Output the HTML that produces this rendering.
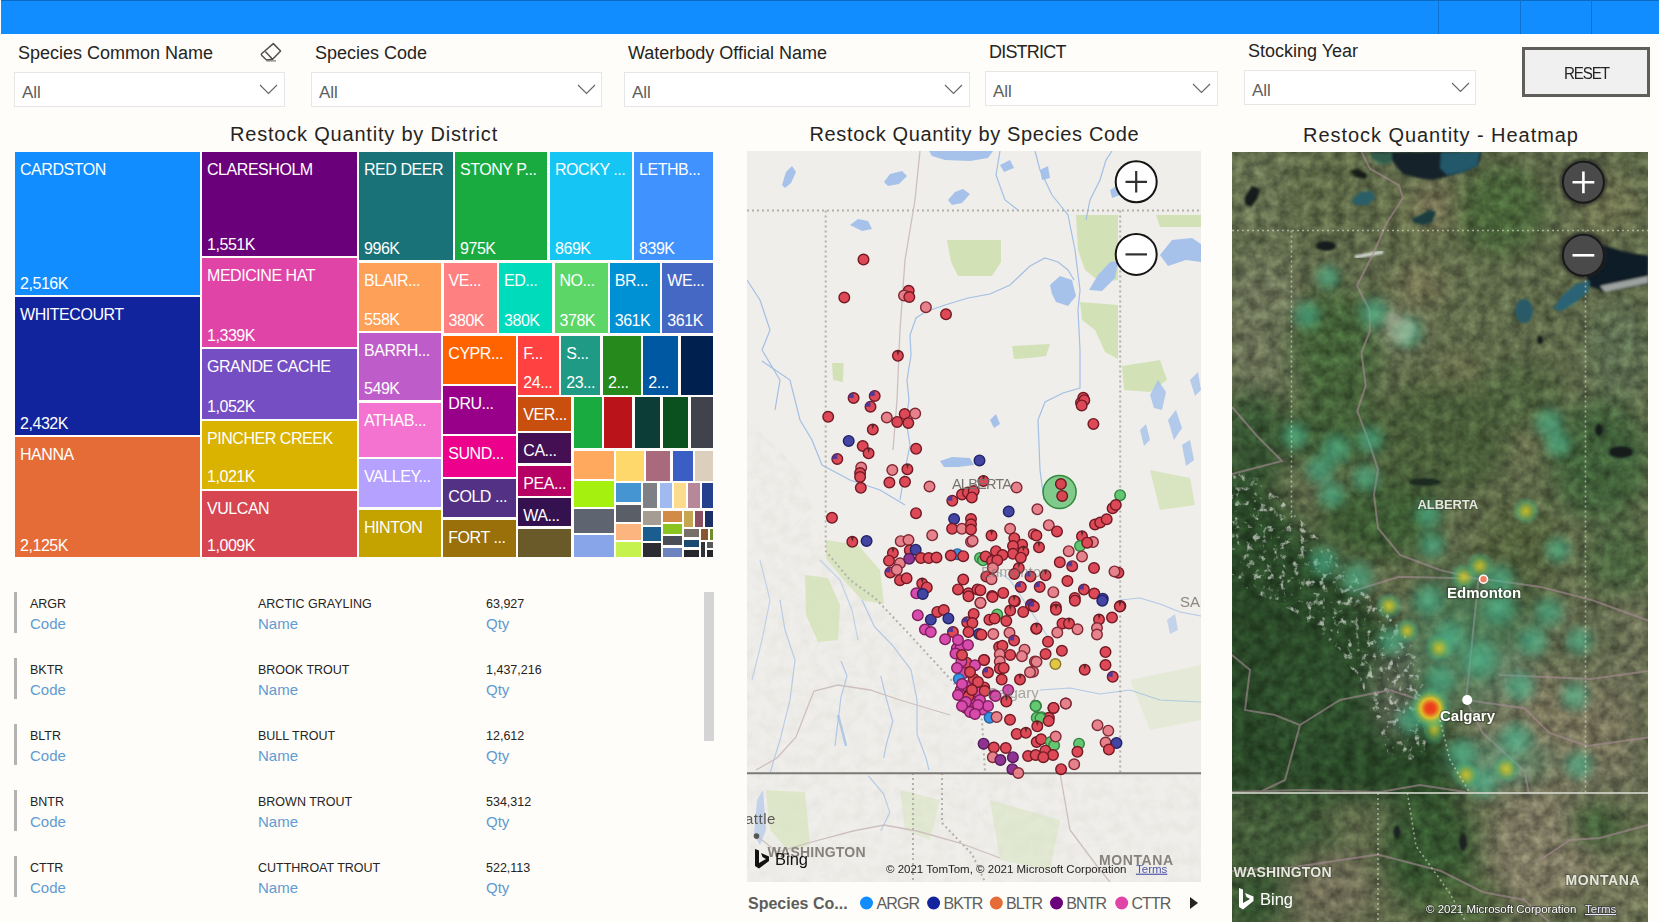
<!DOCTYPE html>
<html><head><meta charset="utf-8">
<style>
*{box-sizing:border-box;margin:0;padding:0}
html,body{width:1660px;height:922px;overflow:hidden;background:#fffdf9;font-family:"Liberation Sans",sans-serif;position:relative}
.a{position:absolute;white-space:nowrap}
.bar{left:1px;top:0;width:1658px;height:33.5px;background:#118dff;border-top:1px solid #0a6bc4}
.div{top:0;width:1px;height:34px;background:#0d72d0}
.lbl{font-size:18px;line-height:18px;color:#252423}
.dd{height:35px;border:1px solid #e6e6e6;background:#fff}
.all{font-size:17px;line-height:17px;color:#605e5c}
.chev{width:17px;height:10px}
.ttl{font-size:20px;line-height:20px;color:#252423;letter-spacing:0.8px}
.tm{position:absolute;overflow:hidden}
.tm span{position:absolute;left:5px;font-size:16px;line-height:16px;color:#fff;white-space:nowrap;letter-spacing:-0.45px}
.tm .n{top:10px}
.tm .v{bottom:-7px}
.row .bl{position:absolute;left:14px;width:3px;height:41px;background:#b3b3b3}
.t13{font-size:12.5px;line-height:13px;color:#252423}
.t15{font-size:15px;line-height:15px;color:#5f9bd1}
</style></head><body>
<div class="a bar"></div>
<div class="a div" style="left:1438px"></div>
<div class="a div" style="left:1520px"></div>
<div class="a div" style="left:1591px"></div>

<!-- slicers -->
<div class="a lbl" style="left:18px;top:44px">Species Common Name</div>
<svg class="a" style="left:258px;top:42px" width="24" height="22" viewBox="0 0 24 22"><path d="M15.3 1.6 L22.6 9 L14.6 17.3 L8.5 18 L3.6 13.2 Q3 12.5 3.6 11.8 Z M7.5 9.8 L14.6 17.3" fill="none" stroke="#505050" stroke-width="1.5" stroke-linejoin="round"/><path d="M8.5 18.9 L18 18.9" stroke="#777" stroke-width="1.2"/></svg>
<div class="a dd" style="left:14px;top:72px;width:271px"></div>
<div class="a all" style="left:22px;top:84px">All</div>

<div class="a lbl" style="left:315px;top:44px">Species Code</div>
<div class="a dd" style="left:311px;top:72px;width:291px"></div>
<div class="a all" style="left:319px;top:84px">All</div>

<div class="a lbl" style="left:628px;top:44px">Waterbody Official Name</div>
<div class="a dd" style="left:624px;top:72px;width:346px"></div>
<div class="a all" style="left:632px;top:84px">All</div>

<div class="a lbl" style="left:989px;top:43px;letter-spacing:-0.8px">DISTRICT</div>
<div class="a dd" style="left:985px;top:71px;width:233px"></div>
<div class="a all" style="left:993px;top:83px">All</div>

<div class="a lbl" style="left:1248px;top:42px">Stocking Year</div>
<div class="a dd" style="left:1244px;top:70px;width:232px"></div>
<div class="a all" style="left:1252px;top:82px">All</div>

<svg class="a" style="left:0;top:0" width="1660" height="110">
<g fill="none" stroke="#666" stroke-width="1.15">
<path d="M260 85 L268.5 93.5 L277 85"/>
<path d="M578 85 L586.5 93.5 L595 85"/>
<path d="M945 85 L953.5 93.5 L962 85"/>
<path d="M1193 84 L1201.5 92.5 L1210 84"/>
<path d="M1452 83 L1460.5 91.5 L1469 83"/>
</g></svg>

<div class="a" style="left:1522px;top:47px;width:128px;height:50px;border:3px solid #5f5e5a;background:#f0f0f0"></div>
<div class="a" style="left:1564px;top:66px;font-size:16px;line-height:16px;color:#252423;letter-spacing:-1.2px;transform:scaleX(0.95);transform-origin:0 0">RESET</div>

<!-- titles -->
<div class="a ttl" style="left:230px;top:124px">Restock Quantity by District</div>
<div class="a ttl" style="left:809.5px;top:124px;letter-spacing:0.65px">Restock Quantity by Species Code</div>
<div class="a ttl" style="left:1303px;top:125px;letter-spacing:0.95px">Restock Quantity - Heatmap</div>

<!-- TREEMAP -->
<div class="tm" style="left:15px;top:152px;width:185px;height:143px;background:#118dff"><span class="n">CARDSTON</span><span class="v" style="top:123.5px">2,516K</span></div>
<div class="tm" style="left:15px;top:297px;width:185px;height:138px;background:#12239e"><span class="n">WHITECOURT</span><span class="v" style="top:118.5px">2,432K</span></div>
<div class="tm" style="left:15px;top:437px;width:185px;height:120px;background:#e66c37"><span class="n">HANNA</span><span class="v" style="top:100.5px">2,125K</span></div>
<div class="tm" style="left:202px;top:152px;width:155px;height:104px;background:#6b007b"><span class="n">CLARESHOLM</span><span class="v" style="top:84.5px">1,551K</span></div>
<div class="tm" style="left:202px;top:258px;width:155px;height:89px;background:#e044a7"><span class="n">MEDICINE HAT</span><span class="v" style="top:69.5px">1,339K</span></div>
<div class="tm" style="left:202px;top:349px;width:155px;height:69.5px;background:#744ec2"><span class="n">GRANDE CACHE</span><span class="v" style="top:50.0px">1,052K</span></div>
<div class="tm" style="left:202px;top:421px;width:155px;height:67.5px;background:#d9b300"><span class="n">PINCHER CREEK</span><span class="v" style="top:48.0px">1,021K</span></div>
<div class="tm" style="left:202px;top:491px;width:155px;height:66px;background:#d64550"><span class="n">VULCAN</span><span class="v" style="top:46.5px">1,009K</span></div>
<div class="tm" style="left:359px;top:152px;width:94px;height:108px;background:#197278"><span class="n">RED DEER</span><span class="v" style="top:88.5px">996K</span></div>
<div class="tm" style="left:455px;top:152px;width:92px;height:108px;background:#1aab40"><span class="n">STONY P...</span><span class="v" style="top:88.5px">975K</span></div>
<div class="tm" style="left:550px;top:152px;width:82px;height:108px;background:#15c6f4"><span class="n">ROCKY ...</span><span class="v" style="top:88.5px">869K</span></div>
<div class="tm" style="left:634px;top:152px;width:79px;height:108px;background:#4092ff"><span class="n">LETHB...</span><span class="v" style="top:88.5px">839K</span></div>
<div class="tm" style="left:359px;top:262.5px;width:82px;height:68.5px;background:#ffa058"><span class="n">BLAIR...</span><span class="v" style="top:49.0px">558K</span></div>
<div class="tm" style="left:443.5px;top:262.5px;width:53.5px;height:70.0px;background:#ff8080"><span class="n">VE...</span><span class="v" style="top:50.5px">380K</span></div>
<div class="tm" style="left:499px;top:262.5px;width:53px;height:70.0px;background:#00dbbc"><span class="n">ED...</span><span class="v" style="top:50.5px">380K</span></div>
<div class="tm" style="left:554.5px;top:262.5px;width:53.0px;height:70.0px;background:#5bd667"><span class="n">NO...</span><span class="v" style="top:50.5px">378K</span></div>
<div class="tm" style="left:609.7px;top:262.5px;width:50.3px;height:70.0px;background:#0091d5"><span class="n">BR...</span><span class="v" style="top:50.5px">361K</span></div>
<div class="tm" style="left:662.3px;top:262.5px;width:50.7px;height:70.0px;background:#4668c5"><span class="n">WE...</span><span class="v" style="top:50.5px">361K</span></div>
<div class="tm" style="left:359px;top:333px;width:82px;height:67px;background:#be5dc9"><span class="n">BARRH...</span><span class="v" style="top:47.5px">549K</span></div>
<div class="tm" style="left:359px;top:403px;width:82px;height:53.5px;background:#f472d0"><span class="n">ATHAB...</span></div>
<div class="tm" style="left:359px;top:459px;width:82px;height:48px;background:#b5a1ff"><span class="n">VALLEY...</span></div>
<div class="tm" style="left:359px;top:510px;width:82px;height:47px;background:#c4a200"><span class="n">HINTON</span></div>
<div class="tm" style="left:443.3px;top:336px;width:72.7px;height:48px;background:#ff6300"><span class="n">CYPR...</span></div>
<div class="tm" style="left:443.3px;top:386px;width:72.7px;height:48px;background:#99008a"><span class="n">DRU...</span></div>
<div class="tm" style="left:443.3px;top:436.3px;width:72.7px;height:40.7px;background:#ec008c"><span class="n">SUND...</span></div>
<div class="tm" style="left:443.3px;top:479.3px;width:72.7px;height:37.7px;background:#533285"><span class="n">COLD ...</span></div>
<div class="tm" style="left:443.3px;top:519.6px;width:72.7px;height:37.4px;background:#99700a"><span class="n">FORT ...</span></div>
<div class="tm" style="left:518.3px;top:336px;width:40.3px;height:58.7px;background:#ff4141"><span class="n">F...</span><span class="v" style="top:39.2px">24...</span></div>
<div class="tm" style="left:561.2px;top:336px;width:38.8px;height:58.7px;background:#1f9a85"><span class="n">S...</span><span class="v" style="top:39.2px">23...</span></div>
<div class="tm" style="left:603px;top:336px;width:37.6px;height:58.7px;background:#25891c"><span class="v" style="top:39.2px">2...</span></div>
<div class="tm" style="left:643.2px;top:336px;width:34.8px;height:58.7px;background:#0057a2"><span class="v" style="top:39.2px">2...</span></div>
<div class="tm" style="left:681px;top:336px;width:32px;height:58.7px;background:#002050"></div>
<div class="tm" style="left:518.3px;top:397.3px;width:52.7px;height:33.3px;background:#c94f0f"><span class="n">VER...</span></div>
<div class="tm" style="left:518.3px;top:433.2px;width:52.7px;height:30.0px;background:#450f54"><span class="n">CA...</span></div>
<div class="tm" style="left:518.3px;top:465.8px;width:52.7px;height:29.9px;background:#b60064"><span class="n">PEA...</span></div>
<div class="tm" style="left:518.3px;top:498.3px;width:52.7px;height:28.1px;background:#34124f"><span class="n">WA...</span></div>
<div class="tm" style="left:518.3px;top:529px;width:52.7px;height:28px;background:#6a5a29"></div>
<div class="tm" style="left:573.5px;top:397.3px;width:28.1px;height:51.0px;background:#1aab40"></div>
<div class="tm" style="left:604.2px;top:397.3px;width:27.8px;height:51.0px;background:#ba141a"></div>
<div class="tm" style="left:634.6px;top:397.3px;width:25.6px;height:51.0px;background:#0c3d37"></div>
<div class="tm" style="left:662.7px;top:397.3px;width:25.3px;height:51.0px;background:#0b511f"></div>
<div class="tm" style="left:690.6px;top:397.3px;width:22.4px;height:51.0px;background:#40434b"></div>
<div class="tm" style="left:573.8px;top:450.6px;width:39.9px;height:28.1px;background:#ffa95e"></div>
<div class="tm" style="left:616.1px;top:450.6px;width:27.8px;height:30.1px;background:#fed86a"></div>
<div class="tm" style="left:646.2px;top:450.6px;width:24.2px;height:30.1px;background:#a86a7c"></div>
<div class="tm" style="left:673.1px;top:450.6px;width:19.6px;height:30.1px;background:#3a5ec4"></div>
<div class="tm" style="left:695px;top:450.6px;width:18px;height:30.1px;background:#dccfbe"></div>
<div class="tm" style="left:573.8px;top:481.4px;width:39.9px;height:25.5px;background:#a6f010"></div>
<div class="tm" style="left:573.8px;top:509.2px;width:39.9px;height:23.7px;background:#5e6470"></div>
<div class="tm" style="left:573.8px;top:535px;width:39.9px;height:21.6px;background:#89a5ea"></div>
<div class="tm" style="left:616.1px;top:483.1px;width:24.7px;height:18.6px;background:#4495d1"></div>
<div class="tm" style="left:616.1px;top:504.7px;width:24.7px;height:17.1px;background:#5a5e67"></div>
<div class="tm" style="left:616.1px;top:524.4px;width:24.7px;height:15.6px;background:#fcb57e"></div>
<div class="tm" style="left:616.1px;top:542.1px;width:24.7px;height:14.5px;background:#c6f24e"></div>
<div class="tm" style="left:643.2px;top:483.1px;width:14.0px;height:25.4px;background:#7e8086"></div>
<div class="tm" style="left:659.8px;top:483.1px;width:12.2px;height:25.4px;background:#a0b9ee"></div>
<div class="tm" style="left:674.2px;top:483.1px;width:12.0px;height:25.4px;background:#fadc8c"></div>
<div class="tm" style="left:688.3px;top:483.1px;width:11.5px;height:25.4px;background:#b7889a"></div>
<div class="tm" style="left:702px;top:483.1px;width:11px;height:25.4px;background:#25418d"></div>
<div class="tm" style="left:643.2px;top:511px;width:17.4px;height:13.8px;background:#a59d93"></div>
<div class="tm" style="left:643.2px;top:527px;width:17.4px;height:14px;background:#1c5d8f"></div>
<div class="tm" style="left:643.2px;top:543px;width:17.4px;height:13.6px;background:#2b2d33"></div>
<div class="tm" style="left:662.9px;top:511px;width:19.3px;height:11px;background:#d38a47"></div>
<div class="tm" style="left:662.9px;top:524.4px;width:19.3px;height:9.5px;background:#8bc421"></div>
<div class="tm" style="left:662.9px;top:536px;width:19.3px;height:9px;background:#4a4d57"></div>
<div class="tm" style="left:662.9px;top:547.8px;width:19.3px;height:8.8px;background:#6d83c0"></div>
<div class="tm" style="left:684.3px;top:511px;width:8.4px;height:15.8px;background:#c5a752"></div>
<div class="tm" style="left:694.8px;top:511px;width:8.1px;height:15.8px;background:#8a5061"></div>
<div class="tm" style="left:705px;top:511px;width:8px;height:15.8px;background:#1b2f66"></div>
<div class="tm" style="left:684.3px;top:528.8px;width:14.8px;height:8.6px;background:#767068"></div>
<div class="tm" style="left:684.3px;top:539.7px;width:14.8px;height:7.4px;background:#1d4a70"></div>
<div class="tm" style="left:684.3px;top:549.6px;width:14.8px;height:7.0px;background:#25272c"></div>
<div class="tm" style="left:701.3px;top:528.8px;width:6.7px;height:10.9px;background:#8a5632"></div>
<div class="tm" style="left:710px;top:528.8px;width:3px;height:10.9px;background:#6e8e2e"></div>
<div class="tm" style="left:701.3px;top:541.5px;width:3.7px;height:15.1px;background:#30343a"></div>
<div class="tm" style="left:706.5px;top:541.5px;width:6.5px;height:6.5px;background:#5a5a5a"></div>
<div class="tm" style="left:706.5px;top:550px;width:6.5px;height:6.6px;background:#25272c"></div>

<!-- TABLE -->
<div class="a" style="left:14px;top:592px;width:3px;height:41px;background:#b3b3b3"></div>
<div class="a t13" style="left:30px;top:597.9px">ARGR</div>
<div class="a t15" style="left:30px;top:616.3px">Code</div>
<div class="a t13" style="left:258px;top:597.9px">ARCTIC GRAYLING</div>
<div class="a t15" style="left:258px;top:616.3px">Name</div>
<div class="a t13" style="left:486px;top:597.9px">63,927</div>
<div class="a t15" style="left:486px;top:616.3px">Qty</div>
<div class="a" style="left:14px;top:658px;width:3px;height:41px;background:#b3b3b3"></div>
<div class="a t13" style="left:30px;top:663.9px">BKTR</div>
<div class="a t15" style="left:30px;top:682.3px">Code</div>
<div class="a t13" style="left:258px;top:663.9px">BROOK TROUT</div>
<div class="a t15" style="left:258px;top:682.3px">Name</div>
<div class="a t13" style="left:486px;top:663.9px">1,437,216</div>
<div class="a t15" style="left:486px;top:682.3px">Qty</div>
<div class="a" style="left:14px;top:724px;width:3px;height:41px;background:#b3b3b3"></div>
<div class="a t13" style="left:30px;top:729.9px">BLTR</div>
<div class="a t15" style="left:30px;top:748.3px">Code</div>
<div class="a t13" style="left:258px;top:729.9px">BULL TROUT</div>
<div class="a t15" style="left:258px;top:748.3px">Name</div>
<div class="a t13" style="left:486px;top:729.9px">12,612</div>
<div class="a t15" style="left:486px;top:748.3px">Qty</div>
<div class="a" style="left:14px;top:790px;width:3px;height:41px;background:#b3b3b3"></div>
<div class="a t13" style="left:30px;top:795.9px">BNTR</div>
<div class="a t15" style="left:30px;top:814.3px">Code</div>
<div class="a t13" style="left:258px;top:795.9px">BROWN TROUT</div>
<div class="a t15" style="left:258px;top:814.3px">Name</div>
<div class="a t13" style="left:486px;top:795.9px">534,312</div>
<div class="a t15" style="left:486px;top:814.3px">Qty</div>
<div class="a" style="left:14px;top:856px;width:3px;height:41px;background:#b3b3b3"></div>
<div class="a t13" style="left:30px;top:861.9px">CTTR</div>
<div class="a t15" style="left:30px;top:880.3px">Code</div>
<div class="a t13" style="left:258px;top:861.9px">CUTTHROAT TROUT</div>
<div class="a t15" style="left:258px;top:880.3px">Name</div>
<div class="a t13" style="left:486px;top:861.9px">522,113</div>
<div class="a t15" style="left:486px;top:880.3px">Qty</div>
<div class="a" style="left:704px;top:592px;width:10px;height:149px;background:#d4d4d4"></div>

<!-- MAP 1 -->
<div class="a" style="left:747px;top:151px;width:454px;height:731px;overflow:hidden"><svg width="454" height="731" viewBox="747 151 454 731" style="display:block">
<rect x="747" y="151" width="454" height="731" fill="#efeeea"/>
<defs>
<filter id="hs" x="0" y="0" width="100%" height="100%">
  <feTurbulence type="fractalNoise" baseFrequency="0.09" numOctaves="3" seed="5" result="n"/>
  <feColorMatrix in="n" type="matrix" values="0 0 0 0 0.55  0 0 0 0 0.55  0 0 0 0 0.52  1.2 0 0 0 -0.45"/>
</filter>
</defs>
<!-- hillshade BC / US mountains -->
<clipPath id="bc"><path d="M747 420 L800 470 L826 551 L875 598 L953 682 L985 773 L1201 773 L1201 882 L747 882 Z"/></clipPath>
<rect x="747" y="400" width="454" height="482" filter="url(#hs)" clip-path="url(#bc)" opacity="0.28"/>
<!-- parks -->
<g fill="#d3e2b6">
<path d="M947 240 L1001 240 L1001 262 L992 276 L958 276 L951 262 Z"/>
<path d="M1076 215 L1118 215 L1118 280 L1100 282 L1085 270 L1078 250 Z"/>
<path d="M1080 302 L1118 305 L1118 359 L1105 352 L1095 330 L1082 320 Z"/>
<path d="M1012 346 L1050 344 L1046 356 L1030 358 L1014 359 Z"/>
<path d="M832 363 L843.5 363 L843 382 L833 380 Z"/>
<path d="M1122 366 L1160 360 L1167 380 L1150 392 L1124 390 Z"/>
<path d="M1156 215 L1201 215 L1201 227 L1160 227 Z"/>
<path d="M805 575 L828 578 L840 605 L838 640 L818 642 L806 615 Z" opacity="0.8"/>
<path d="M826 540 L858 545 L880 570 L884 604 L862 600 L842 578 L826 558 Z" opacity="0.8"/>
<path d="M1150 470 L1190 478 L1195 505 L1160 510 Z" opacity="0.8"/>
<path d="M766 790 L805 792 L810 845 L790 852 L770 830 Z" opacity="0.6"/>
<path d="M990 800 L1060 820 L1050 870 L1000 860 Z" opacity="0.45"/>
<path d="M1130 680 L1201 665 L1201 720 L1150 730 Z" opacity="0.35"/>
<path d="M900 790 L940 800 L930 840 L905 830 Z" opacity="0.45"/>
</g>
<!-- lakes -->
<g fill="#a6c2ea">
<path d="M929 151 L993 151 L988 158 L970 161 L945 160 L932 156 Z"/>
<path d="M884 182 L890 174 L902 171 L907 176 L899 184 L888 186 Z"/>
<path d="M948 200 L955 192 L963 189 L970 194 L962 203 L952 205 Z"/>
<path d="M782 185 L786 172 L792 166 L796 172 L791 183 L785 188 Z"/>
<path d="M850 225 L858 219 L868 221 L872 229 L862 231 Z"/>
<path d="M1050 285 L1060 276 L1072 280 L1076 296 L1068 306 L1056 302 L1052 294 Z"/>
<path d="M1089 290 L1098 275 L1110 262 L1118 261 L1115 278 L1102 291 Z"/>
<path d="M1160 255 L1172 240 L1192 238 L1201 244 L1201 262 L1186 260 L1168 266 Z"/>
<path d="M940 461 L952 457 L970 458 L974 465 L958 467 L944 467 Z"/>
<path d="M1150 395 L1158 380 L1166 392 L1162 410 L1154 408 Z" opacity="0.85"/>
<path d="M1168 420 L1176 410 L1182 428 L1174 440 Z" opacity="0.85"/>
<path d="M1182 445 L1190 440 L1194 460 L1186 466 Z" opacity="0.8"/>
<path d="M1140 430 L1146 424 L1150 440 L1144 446 Z" opacity="0.8"/>
<path d="M1190 380 L1198 372 L1201 390 L1195 396 Z" opacity="0.8"/>
<path d="M1110 190 L1118 185 L1120 195 L1112 198 Z"/>
<path d="M1040 170 L1048 166 L1050 178 L1042 180 Z"/>
<path d="M1000 165 L1010 160 L1014 168 L1004 172 Z"/>
<path d="M990 420 L996 414 L1000 424 L994 428 Z"/>
<path d="M757 800 L763 790 L766 830 L760 845 L754 835 Z" opacity="0.6"/>
<path d="M1167 620 L1175 614 L1178 630 L1170 634 Z" opacity="0.6"/>
</g>
<!-- rivers -->
<g fill="none" stroke="#a3bfe4" stroke-width="1.2">
<path d="M900 500 L905 470 L910 445 L906 420 L909 400 L907 380 L911 355 L910 335 L916 318 L925 312 L945 305 L968 298 L990 294 L1010 285 L1030 266 L1045 258 L1058 262 L1068 270 L1074 280"/>
<path d="M1044 500 L1040 470 L1038 420 L1045 402 L1063 393 L1080 388 L1080 350 L1078 310 L1080 290 L1075 250 L1068 215 L1052 195 L1040 170 L1035 151"/>
<path d="M747 280 L760 300 L770 330 L762 350 L780 380 L775 410"/>
<path d="M762 361 L790 380 L800 420 L812 440 L822 465 L850 480 L880 490 L905 505"/>
<path d="M1000 151 L996 175 L1005 200 L1018 210"/>
<path d="M1086 220 L1090 200 L1100 180 L1106 160 L1112 151"/>
<path d="M1120 600 L1140 598 L1160 604 L1180 612 L1201 616" opacity="0.8"/>
<path d="M1040 690 L1070 688 L1100 694 L1130 690 L1160 700 L1201 702" opacity="0.8"/>
<path d="M862 600 L874.6 627 L892.8 645.6 L911 670 L917 700 L917 734 L926 758 L929 770" opacity="0.8"/>
<path d="M841 661 L847 676 L841 697 L838 721 L835 746" opacity="0.8"/>
<path d="M880.7 676 L886.7 700 L892.8 721.5 L886.7 743 L883.7 758" opacity="0.8"/>
<path d="M780 600 L785 630 L795 660 L790 700 L780 740 L770 773" opacity="0.7"/>
<path d="M760 560 L770 600 L762 640 L752 680" opacity="0.6"/>
<path d="M868.5 776 L883.7 794 L889.8 812.6 L880.7 831" opacity="0.7"/>
<path d="M820 560 L840 580 L852 610 L858 640" opacity="0.6"/>
<path d="M838 715 L842 730 L846 746" stroke-width="2.5" opacity="0.8"/>
<path d="M980 560 L1010 580 L1030 610 L1050 640" opacity="0.7"/>
</g>
<!-- borders -->
<g stroke="#b3afa9" stroke-width="2" stroke-dasharray="2 3" fill="none">
<path d="M747 210.5 L1201 210.5"/>
<path d="M825.7 210.5 L825.7 551 L850 580 L875 598 L910 635 L953 682 L982 720 L985 773"/>
<path d="M1120.2 210.5 L1120.2 773"/>
<path d="M913 773 L913 882"/>
<path d="M942 773 L942 823 L972 854 L985 882"/>
</g>
<path d="M747 773.3 L1201 773.3" stroke="#7c7a76" stroke-width="2"/>
<!-- roads (faint) -->
<g fill="none" stroke="#cdbfc0" stroke-width="1.3">
<path d="M757 836 L777 852 L808 843 L853 831 L884 825 L917 831 L960 843 L1000 858"/>
<path d="M756 770 L777 758 L796 737 L808 706 L814 691 L838 685 L870 690 L900 700 L950 715"/>
<path d="M1060 773 L1070 830 L1100 870 L1110 882"/>
<path d="M920 151 L915 200 L905 260 L900 330 L897 400 L893 450"/>
</g>

<circle cx="1059.6" cy="492" r="16.5" fill="#6cc47a" fill-opacity="0.85" stroke="#2f8a3c" stroke-width="1.5"/>
<g opacity="0.95"><circle cx="863.5" cy="259.6" r="5.3" fill="#dc404e" stroke="#6a0e1a" stroke-width="1.4"/>
<circle cx="844.3" cy="297.5" r="5.3" fill="#dc404e" stroke="#6a0e1a" stroke-width="1.4"/>
<circle cx="908.7" cy="290.8" r="5.3" fill="#dc404e" stroke="#6a0e1a" stroke-width="1.4"/>
<circle cx="904.0" cy="295.6" r="5.3" fill="#e47c86" stroke="#7a1e2c" stroke-width="1.4"/>
<circle cx="909.3" cy="297.0" r="5.3" fill="#dc404e" stroke="#6a0e1a" stroke-width="1.4"/>
<circle cx="925.9" cy="307.2" r="5.3" fill="#e47c86" stroke="#7a1e2c" stroke-width="1.4"/>
<circle cx="946.0" cy="314.3" r="5.3" fill="#dc404e" stroke="#6a0e1a" stroke-width="1.4"/>
<circle cx="897.9" cy="355.8" r="5.3" fill="#dc404e" stroke="#6a0e1a" stroke-width="1.4"/>
<path d="M897.9 355.8 L896.4 350.7 A5.3 5.3 0 0 1 899.6999999999999 350.8 Z" fill="#3a1a1a" opacity="0.85"/>
<circle cx="1083.3" cy="397.8" r="5.3" fill="#dc404e" stroke="#6a0e1a" stroke-width="1.4"/>
<circle cx="1081.0" cy="402.8" r="5.3" fill="#dc404e" stroke="#6a0e1a" stroke-width="1.4"/>
<circle cx="1084.3" cy="400.2" r="5.3" fill="#dc404e" stroke="#6a0e1a" stroke-width="1.4"/>
<circle cx="1081.7" cy="405.4" r="5.3" fill="#dc404e" stroke="#6a0e1a" stroke-width="1.4"/>
<circle cx="1093.4" cy="423.9" r="5.3" fill="#dc404e" stroke="#6a0e1a" stroke-width="1.4"/>
<circle cx="853.6" cy="398.0" r="5.3" fill="#dc404e" stroke="#6a0e1a" stroke-width="1.4"/>
<path d="M853.6 398.0 L853.6 392.7 A5.3 5.3 0 0 0 848.3000000000001 398.0 Z" fill="#3a2d9a" opacity="0.9"/>
<circle cx="874.7" cy="395.9" r="5.3" fill="#dc404e" stroke="#6a0e1a" stroke-width="1.4"/>
<path d="M874.7 395.9 L874.7 390.59999999999997 A5.3 5.3 0 0 0 869.4000000000001 395.9 Z" fill="#3a2d9a" opacity="0.9"/>
<circle cx="870.5" cy="406.7" r="5.3" fill="#dc404e" stroke="#6a0e1a" stroke-width="1.4"/>
<path d="M870.5 406.7 L870.5 401.4 A5.3 5.3 0 0 0 865.2 406.7 Z" fill="#3a2d9a" opacity="0.9"/>
<circle cx="828.2" cy="416.8" r="5.3" fill="#dc404e" stroke="#6a0e1a" stroke-width="1.4"/>
<circle cx="886.8" cy="417.5" r="5.3" fill="#e47c86" stroke="#7a1e2c" stroke-width="1.4"/>
<circle cx="904.7" cy="414.1" r="5.3" fill="#dc404e" stroke="#6a0e1a" stroke-width="1.4"/>
<circle cx="915.2" cy="413.6" r="5.3" fill="#e47c86" stroke="#7a1e2c" stroke-width="1.4"/>
<circle cx="897.2" cy="421.9" r="5.3" fill="#dc404e" stroke="#6a0e1a" stroke-width="1.4"/>
<circle cx="908.3" cy="423.0" r="5.3" fill="#dc404e" stroke="#6a0e1a" stroke-width="1.4"/>
<circle cx="872.8" cy="429.5" r="5.3" fill="#dc404e" stroke="#6a0e1a" stroke-width="1.4"/>
<path d="M872.8 429.5 L871.3 424.4 A5.3 5.3 0 0 1 874.5999999999999 424.5 Z" fill="#3a1a1a" opacity="0.85"/>
<circle cx="848.7" cy="440.9" r="5.3" fill="#3a3aa0" stroke="#161a60" stroke-width="1.4"/>
<circle cx="862.7" cy="446.0" r="5.3" fill="#dc404e" stroke="#6a0e1a" stroke-width="1.4"/>
<circle cx="868.6" cy="453.3" r="5.3" fill="#dc404e" stroke="#6a0e1a" stroke-width="1.4"/>
<path d="M868.6 453.3 L867.1 448.2 A5.3 5.3 0 0 1 870.4 448.3 Z" fill="#3a1a1a" opacity="0.85"/>
<circle cx="916.1" cy="448.8" r="5.3" fill="#dc404e" stroke="#6a0e1a" stroke-width="1.4"/>
<circle cx="837.3" cy="459.0" r="5.3" fill="#dc404e" stroke="#6a0e1a" stroke-width="1.4"/>
<path d="M837.3 459.0 L837.3 453.7 A5.3 5.3 0 0 0 832.0 459.0 Z" fill="#3a2d9a" opacity="0.9"/>
<circle cx="861.2" cy="467.5" r="5.3" fill="#e47c86" stroke="#7a1e2c" stroke-width="1.4"/>
<circle cx="860.1" cy="473.1" r="5.3" fill="#dc404e" stroke="#6a0e1a" stroke-width="1.4"/>
<circle cx="860.1" cy="477.0" r="5.3" fill="#dc404e" stroke="#6a0e1a" stroke-width="1.4"/>
<circle cx="860.8" cy="487.8" r="5.3" fill="#dc404e" stroke="#6a0e1a" stroke-width="1.4"/>
<circle cx="892.3" cy="470.1" r="5.3" fill="#e47c86" stroke="#7a1e2c" stroke-width="1.4"/>
<circle cx="907.4" cy="469.2" r="5.3" fill="#dc404e" stroke="#6a0e1a" stroke-width="1.4"/>
<path d="M907.4 469.2 L905.9 464.09999999999997 A5.3 5.3 0 0 1 909.1999999999999 464.2 Z" fill="#3a1a1a" opacity="0.85"/>
<circle cx="889.4" cy="482.6" r="5.3" fill="#dc404e" stroke="#6a0e1a" stroke-width="1.4"/>
<circle cx="905.0" cy="481.8" r="5.3" fill="#dc404e" stroke="#6a0e1a" stroke-width="1.4"/>
<circle cx="929.5" cy="486.5" r="5.3" fill="#e47c86" stroke="#7a1e2c" stroke-width="1.4"/>
<circle cx="979.5" cy="460.4" r="5.3" fill="#3a3aa0" stroke="#161a60" stroke-width="1.4"/>
<circle cx="983.4" cy="480.9" r="5.3" fill="#dc404e" stroke="#6a0e1a" stroke-width="1.4"/>
<path d="M983.4 480.9 L981.9 475.79999999999995 A5.3 5.3 0 0 1 985.1999999999999 475.9 Z" fill="#3a1a1a" opacity="0.85"/>
<circle cx="1016.6" cy="487.4" r="5.3" fill="#e47c86" stroke="#7a1e2c" stroke-width="1.4"/>
<circle cx="1060.9" cy="484.1" r="5.3" fill="#dc404e" stroke="#6a0e1a" stroke-width="1.4"/>
<circle cx="1062.2" cy="495.9" r="5.3" fill="#dc404e" stroke="#6a0e1a" stroke-width="1.4"/>
<circle cx="1120.1" cy="495.2" r="5.3" fill="#5cc46c" stroke="#2b7c38" stroke-width="1.4"/>
<circle cx="952.3" cy="500.8" r="5.3" fill="#dc404e" stroke="#6a0e1a" stroke-width="1.4"/>
<path d="M952.3 500.8 L952.3 495.5 A5.3 5.3 0 0 0 947.0 500.8 Z" fill="#3a2d9a" opacity="0.9"/>
<circle cx="962.0" cy="494.5" r="5.3" fill="#dc404e" stroke="#6a0e1a" stroke-width="1.4"/>
<circle cx="967.9" cy="492.5" r="5.3" fill="#dc404e" stroke="#6a0e1a" stroke-width="1.4"/>
<circle cx="973.7" cy="491.0" r="5.3" fill="#dc404e" stroke="#6a0e1a" stroke-width="1.4"/>
<circle cx="971.8" cy="497.4" r="5.3" fill="#dc404e" stroke="#6a0e1a" stroke-width="1.4"/>
<circle cx="832.0" cy="517.8" r="5.3" fill="#dc404e" stroke="#6a0e1a" stroke-width="1.4"/>
<circle cx="916.0" cy="513.2" r="5.3" fill="#dc404e" stroke="#6a0e1a" stroke-width="1.4"/>
<circle cx="954.1" cy="519.0" r="5.3" fill="#3a3aa0" stroke="#161a60" stroke-width="1.4"/>
<circle cx="952.1" cy="528.8" r="5.3" fill="#dc404e" stroke="#6a0e1a" stroke-width="1.4"/>
<circle cx="961.9" cy="528.8" r="5.3" fill="#e47c86" stroke="#7a1e2c" stroke-width="1.4"/>
<circle cx="971.0" cy="519.0" r="5.3" fill="#dc404e" stroke="#6a0e1a" stroke-width="1.4"/>
<circle cx="971.0" cy="524.3" r="5.3" fill="#dc404e" stroke="#6a0e1a" stroke-width="1.4"/>
<circle cx="971.0" cy="529.5" r="5.3" fill="#dc404e" stroke="#6a0e1a" stroke-width="1.4"/>
<circle cx="932.2" cy="535.3" r="5.3" fill="#e47c86" stroke="#7a1e2c" stroke-width="1.4"/>
<circle cx="971.0" cy="541.8" r="5.3" fill="#e47c86" stroke="#7a1e2c" stroke-width="1.4"/>
<circle cx="852.3" cy="541.8" r="5.3" fill="#dc404e" stroke="#6a0e1a" stroke-width="1.4"/>
<path d="M852.3 541.8 L850.8 536.6999999999999 A5.3 5.3 0 0 1 854.0999999999999 536.8 Z" fill="#3a1a1a" opacity="0.85"/>
<circle cx="866.6" cy="541.0" r="5.3" fill="#3a3aa0" stroke="#161a60" stroke-width="1.4"/>
<circle cx="900.7" cy="541.2" r="5.3" fill="#e47c86" stroke="#7a1e2c" stroke-width="1.4"/>
<circle cx="908.5" cy="540.1" r="5.3" fill="#e47c86" stroke="#7a1e2c" stroke-width="1.4"/>
<circle cx="892.9" cy="552.9" r="5.3" fill="#dc404e" stroke="#6a0e1a" stroke-width="1.4"/>
<path d="M892.9 552.9 L891.4 547.8 A5.3 5.3 0 0 1 894.6999999999999 547.9 Z" fill="#3a1a1a" opacity="0.85"/>
<circle cx="909.8" cy="550.3" r="5.3" fill="#dc404e" stroke="#6a0e1a" stroke-width="1.4"/>
<circle cx="915.7" cy="549.7" r="5.3" fill="#3a3aa0" stroke="#161a60" stroke-width="1.4"/>
<circle cx="889.0" cy="560.7" r="5.3" fill="#dc404e" stroke="#6a0e1a" stroke-width="1.4"/>
<circle cx="900.0" cy="563.3" r="5.3" fill="#e47c86" stroke="#7a1e2c" stroke-width="1.4"/>
<circle cx="909.2" cy="558.8" r="5.3" fill="#8a2a8e" stroke="#4a1050" stroke-width="1.4"/>
<circle cx="920.9" cy="558.1" r="5.3" fill="#dc404e" stroke="#6a0e1a" stroke-width="1.4"/>
<circle cx="928.7" cy="558.1" r="5.3" fill="#dc404e" stroke="#6a0e1a" stroke-width="1.4"/>
<circle cx="936.5" cy="557.5" r="5.3" fill="#dc404e" stroke="#6a0e1a" stroke-width="1.4"/>
<circle cx="957.4" cy="554.2" r="5.3" fill="#2b8fe8" stroke="#1a5a9a" stroke-width="1.4"/>
<circle cx="950.8" cy="555.5" r="5.3" fill="#dc404e" stroke="#6a0e1a" stroke-width="1.4"/>
<circle cx="963.2" cy="556.2" r="5.3" fill="#dc404e" stroke="#6a0e1a" stroke-width="1.4"/>
<circle cx="890.3" cy="572.4" r="5.3" fill="#dc404e" stroke="#6a0e1a" stroke-width="1.4"/>
<path d="M890.3 572.4 L890.3 567.1 A5.3 5.3 0 0 0 885.0 572.4 Z" fill="#3a2d9a" opacity="0.9"/>
<circle cx="896.8" cy="569.8" r="5.3" fill="#e47c86" stroke="#7a1e2c" stroke-width="1.4"/>
<circle cx="900.0" cy="580.2" r="5.3" fill="#dc404e" stroke="#6a0e1a" stroke-width="1.4"/>
<circle cx="906.6" cy="578.3" r="5.3" fill="#dc404e" stroke="#6a0e1a" stroke-width="1.4"/>
<circle cx="922.2" cy="583.5" r="5.3" fill="#dc404e" stroke="#6a0e1a" stroke-width="1.4"/>
<path d="M922.2 583.5 L920.7 578.4 A5.3 5.3 0 0 1 924.0 578.5 Z" fill="#3a1a1a" opacity="0.85"/>
<circle cx="926.8" cy="587.4" r="5.3" fill="#dc404e" stroke="#6a0e1a" stroke-width="1.4"/>
<circle cx="916.3" cy="593.3" r="5.3" fill="#d442a8" stroke="#7a1258" stroke-width="1.4"/>
<circle cx="922.8" cy="594.0" r="5.3" fill="#3a3aa0" stroke="#161a60" stroke-width="1.4"/>
<circle cx="963.2" cy="579.6" r="5.3" fill="#dc404e" stroke="#6a0e1a" stroke-width="1.4"/>
<circle cx="958.0" cy="589.4" r="5.3" fill="#dc404e" stroke="#6a0e1a" stroke-width="1.4"/>
<circle cx="968.4" cy="593.3" r="5.3" fill="#dc404e" stroke="#6a0e1a" stroke-width="1.4"/>
<circle cx="977.5" cy="589.4" r="5.3" fill="#dc404e" stroke="#6a0e1a" stroke-width="1.4"/>
<circle cx="980.0" cy="558.0" r="5.3" fill="#5cc46c" stroke="#2b7c38" stroke-width="1.4"/>
<circle cx="1008.7" cy="511.5" r="5.3" fill="#3a3aa0" stroke="#161a60" stroke-width="1.4"/>
<circle cx="1037.4" cy="509.3" r="5.3" fill="#e47c86" stroke="#7a1e2c" stroke-width="1.4"/>
<circle cx="1112.6" cy="508.2" r="5.3" fill="#dc404e" stroke="#6a0e1a" stroke-width="1.4"/>
<path d="M1112.6 508.2 L1111.1 503.09999999999997 A5.3 5.3 0 0 1 1114.3999999999999 503.2 Z" fill="#3a1a1a" opacity="0.85"/>
<circle cx="1115.8" cy="505.0" r="5.3" fill="#dc404e" stroke="#6a0e1a" stroke-width="1.4"/>
<circle cx="1095.0" cy="524.5" r="5.3" fill="#dc404e" stroke="#6a0e1a" stroke-width="1.4"/>
<circle cx="1100.2" cy="522.5" r="5.3" fill="#dc404e" stroke="#6a0e1a" stroke-width="1.4"/>
<circle cx="1106.7" cy="519.3" r="5.3" fill="#dc404e" stroke="#6a0e1a" stroke-width="1.4"/>
<circle cx="1048.8" cy="525.2" r="5.3" fill="#e47c86" stroke="#7a1e2c" stroke-width="1.4"/>
<circle cx="1057.0" cy="531.4" r="5.3" fill="#dc404e" stroke="#6a0e1a" stroke-width="1.4"/>
<circle cx="1010.1" cy="528.8" r="5.3" fill="#e47c86" stroke="#7a1e2c" stroke-width="1.4"/>
<circle cx="991.5" cy="535.6" r="5.3" fill="#dc404e" stroke="#6a0e1a" stroke-width="1.4"/>
<path d="M991.5 535.6 L990.0 530.5 A5.3 5.3 0 0 1 993.3 530.6 Z" fill="#3a1a1a" opacity="0.85"/>
<circle cx="972.6" cy="540.8" r="5.3" fill="#e47c86" stroke="#7a1e2c" stroke-width="1.4"/>
<circle cx="1033.8" cy="534.3" r="5.3" fill="#e47c86" stroke="#7a1e2c" stroke-width="1.4"/>
<circle cx="1036.4" cy="535.6" r="5.3" fill="#dc404e" stroke="#6a0e1a" stroke-width="1.4"/>
<circle cx="1039.0" cy="547.3" r="5.3" fill="#dc404e" stroke="#6a0e1a" stroke-width="1.4"/>
<path d="M1039.0 547.3 L1037.5 542.1999999999999 A5.3 5.3 0 0 1 1040.8 542.3 Z" fill="#3a1a1a" opacity="0.85"/>
<circle cx="1014.3" cy="538.2" r="5.3" fill="#dc404e" stroke="#6a0e1a" stroke-width="1.4"/>
<circle cx="1022.1" cy="544.7" r="5.3" fill="#dc404e" stroke="#6a0e1a" stroke-width="1.4"/>
<circle cx="1013.0" cy="546.0" r="5.3" fill="#dc404e" stroke="#6a0e1a" stroke-width="1.4"/>
<circle cx="1023.4" cy="551.8" r="5.3" fill="#dc404e" stroke="#6a0e1a" stroke-width="1.4"/>
<path d="M1023.4 551.8 L1021.9 546.6999999999999 A5.3 5.3 0 0 1 1025.2 546.8 Z" fill="#3a1a1a" opacity="0.85"/>
<circle cx="1013.0" cy="553.8" r="5.3" fill="#dc404e" stroke="#6a0e1a" stroke-width="1.4"/>
<circle cx="1020.8" cy="557.7" r="5.3" fill="#dc404e" stroke="#6a0e1a" stroke-width="1.4"/>
<circle cx="983.0" cy="560.3" r="5.3" fill="#5cc46c" stroke="#2b7c38" stroke-width="1.4"/>
<circle cx="996.0" cy="551.2" r="5.3" fill="#dc404e" stroke="#6a0e1a" stroke-width="1.4"/>
<circle cx="1002.5" cy="555.1" r="5.3" fill="#dc404e" stroke="#6a0e1a" stroke-width="1.4"/>
<circle cx="985.6" cy="556.4" r="5.3" fill="#dc404e" stroke="#6a0e1a" stroke-width="1.4"/>
<circle cx="992.1" cy="561.0" r="5.3" fill="#dc404e" stroke="#6a0e1a" stroke-width="1.4"/>
<circle cx="997.3" cy="560.3" r="5.3" fill="#dc404e" stroke="#6a0e1a" stroke-width="1.4"/>
<circle cx="992.8" cy="568.1" r="5.3" fill="#e47c86" stroke="#7a1e2c" stroke-width="1.4"/>
<circle cx="1082.0" cy="536.2" r="5.3" fill="#dc404e" stroke="#6a0e1a" stroke-width="1.4"/>
<path d="M1082.0 536.2 L1080.5 531.1 A5.3 5.3 0 0 1 1083.8 531.2 Z" fill="#3a1a1a" opacity="0.85"/>
<circle cx="1093.0" cy="542.1" r="5.3" fill="#e47c86" stroke="#7a1e2c" stroke-width="1.4"/>
<circle cx="1080.0" cy="546.0" r="5.3" fill="#5cc46c" stroke="#2b7c38" stroke-width="1.4"/>
<circle cx="1087.2" cy="542.7" r="5.3" fill="#dc404e" stroke="#6a0e1a" stroke-width="1.4"/>
<circle cx="1068.7" cy="551.2" r="5.3" fill="#e47c86" stroke="#7a1e2c" stroke-width="1.4"/>
<circle cx="1082.0" cy="556.4" r="5.3" fill="#e47c86" stroke="#7a1e2c" stroke-width="1.4"/>
<circle cx="1059.8" cy="562.3" r="5.3" fill="#dc404e" stroke="#6a0e1a" stroke-width="1.4"/>
<circle cx="1072.2" cy="566.2" r="5.3" fill="#dc404e" stroke="#6a0e1a" stroke-width="1.4"/>
<path d="M1072.2 566.2 L1072.2 560.9000000000001 A5.3 5.3 0 0 0 1066.9 566.2 Z" fill="#3a2d9a" opacity="0.9"/>
<circle cx="1094.0" cy="568.1" r="5.3" fill="#dc404e" stroke="#6a0e1a" stroke-width="1.4"/>
<circle cx="1118.4" cy="572.7" r="5.3" fill="#dc404e" stroke="#6a0e1a" stroke-width="1.4"/>
<circle cx="1114.5" cy="571.4" r="5.3" fill="#e47c86" stroke="#7a1e2c" stroke-width="1.4"/>
<circle cx="1018.8" cy="568.1" r="5.3" fill="#dc404e" stroke="#6a0e1a" stroke-width="1.4"/>
<path d="M1018.8 568.1 L1017.3 563.0 A5.3 5.3 0 0 1 1020.5999999999999 563.1 Z" fill="#3a1a1a" opacity="0.85"/>
<circle cx="1014.3" cy="574.0" r="5.3" fill="#dc404e" stroke="#6a0e1a" stroke-width="1.4"/>
<circle cx="1030.5" cy="576.6" r="5.3" fill="#dc404e" stroke="#6a0e1a" stroke-width="1.4"/>
<path d="M1030.5 576.6 L1030.5 571.3000000000001 A5.3 5.3 0 0 0 1025.2 576.6 Z" fill="#3a2d9a" opacity="0.9"/>
<circle cx="1045.5" cy="575.3" r="5.3" fill="#dc404e" stroke="#6a0e1a" stroke-width="1.4"/>
<path d="M1045.5 575.3 L1044.0 570.1999999999999 A5.3 5.3 0 0 1 1047.3 570.3 Z" fill="#3a1a1a" opacity="0.85"/>
<circle cx="986.3" cy="576.6" r="5.3" fill="#dc404e" stroke="#6a0e1a" stroke-width="1.4"/>
<circle cx="991.5" cy="579.2" r="5.3" fill="#e47c86" stroke="#7a1e2c" stroke-width="1.4"/>
<circle cx="1067.4" cy="581.1" r="5.3" fill="#dc404e" stroke="#6a0e1a" stroke-width="1.4"/>
<circle cx="1020.8" cy="587.0" r="5.3" fill="#dc404e" stroke="#6a0e1a" stroke-width="1.4"/>
<path d="M1020.8 587.0 L1020.8 581.7 A5.3 5.3 0 0 0 1015.5 587.0 Z" fill="#3a2d9a" opacity="0.9"/>
<circle cx="1039.7" cy="587.0" r="5.3" fill="#dc404e" stroke="#6a0e1a" stroke-width="1.4"/>
<path d="M1039.7 587.0 L1039.7 581.7 A5.3 5.3 0 0 0 1034.4 587.0 Z" fill="#3a2d9a" opacity="0.9"/>
<circle cx="980.4" cy="590.2" r="5.3" fill="#dc404e" stroke="#6a0e1a" stroke-width="1.4"/>
<circle cx="992.1" cy="596.1" r="5.3" fill="#dc404e" stroke="#6a0e1a" stroke-width="1.4"/>
<circle cx="1003.2" cy="592.9" r="5.3" fill="#dc404e" stroke="#6a0e1a" stroke-width="1.4"/>
<circle cx="1053.3" cy="592.2" r="5.3" fill="#e47c86" stroke="#7a1e2c" stroke-width="1.4"/>
<circle cx="1083.9" cy="589.6" r="5.3" fill="#dc404e" stroke="#6a0e1a" stroke-width="1.4"/>
<path d="M1083.9 589.6 L1083.9 584.3000000000001 A5.3 5.3 0 0 0 1078.6000000000001 589.6 Z" fill="#3a2d9a" opacity="0.9"/>
<circle cx="1094.3" cy="593.5" r="5.3" fill="#dc404e" stroke="#6a0e1a" stroke-width="1.4"/>
<circle cx="1102.8" cy="598.7" r="5.3" fill="#3a3aa0" stroke="#161a60" stroke-width="1.4"/>
<circle cx="1074.8" cy="598.1" r="5.3" fill="#dc404e" stroke="#6a0e1a" stroke-width="1.4"/>
<circle cx="980.4" cy="603.0" r="5.3" fill="#e47c86" stroke="#7a1e2c" stroke-width="1.4"/>
<circle cx="1014.9" cy="601.3" r="5.3" fill="#dc404e" stroke="#6a0e1a" stroke-width="1.4"/>
<path d="M1014.9 601.3 L1013.4 596.1999999999999 A5.3 5.3 0 0 1 1016.6999999999999 596.3 Z" fill="#3a1a1a" opacity="0.85"/>
<circle cx="1031.2" cy="604.6" r="5.3" fill="#dc404e" stroke="#6a0e1a" stroke-width="1.4"/>
<path d="M1031.2 604.6 L1031.2 599.3000000000001 A5.3 5.3 0 0 0 1025.9 604.6 Z" fill="#3a2d9a" opacity="0.9"/>
<circle cx="1120.4" cy="605.9" r="5.3" fill="#dc404e" stroke="#6a0e1a" stroke-width="1.4"/>
<path d="M1120.4 605.9 L1118.9 600.8 A5.3 5.3 0 0 1 1122.2 600.9 Z" fill="#3a1a1a" opacity="0.85"/>
<circle cx="1055.9" cy="607.2" r="5.3" fill="#dc404e" stroke="#6a0e1a" stroke-width="1.4"/>
<circle cx="917.8" cy="615.2" r="5.3" fill="#d442a8" stroke="#7a1258" stroke-width="1.4"/>
<circle cx="930.8" cy="619.7" r="5.3" fill="#3a3aa0" stroke="#161a60" stroke-width="1.4"/>
<circle cx="937.3" cy="611.9" r="5.3" fill="#dc404e" stroke="#6a0e1a" stroke-width="1.4"/>
<circle cx="943.8" cy="610.0" r="5.3" fill="#dc404e" stroke="#6a0e1a" stroke-width="1.4"/>
<circle cx="948.4" cy="618.4" r="5.3" fill="#3a3aa0" stroke="#161a60" stroke-width="1.4"/>
<circle cx="924.9" cy="629.5" r="5.3" fill="#d442a8" stroke="#7a1258" stroke-width="1.4"/>
<circle cx="930.8" cy="632.1" r="5.3" fill="#d442a8" stroke="#7a1258" stroke-width="1.4"/>
<circle cx="952.9" cy="632.1" r="5.3" fill="#dc404e" stroke="#6a0e1a" stroke-width="1.4"/>
<path d="M952.9 632.1 L952.9 626.8000000000001 A5.3 5.3 0 0 0 947.6 632.1 Z" fill="#3a2d9a" opacity="0.9"/>
<circle cx="945.1" cy="639.3" r="5.3" fill="#d442a8" stroke="#7a1258" stroke-width="1.4"/>
<circle cx="973.7" cy="613.9" r="5.3" fill="#dc404e" stroke="#6a0e1a" stroke-width="1.4"/>
<circle cx="967.2" cy="622.3" r="5.3" fill="#dc404e" stroke="#6a0e1a" stroke-width="1.4"/>
<path d="M967.2 622.3 L967.2 617.0 A5.3 5.3 0 0 0 961.9000000000001 622.3 Z" fill="#3a2d9a" opacity="0.9"/>
<circle cx="972.4" cy="623.0" r="5.3" fill="#dc404e" stroke="#6a0e1a" stroke-width="1.4"/>
<circle cx="968.5" cy="632.1" r="5.3" fill="#dc404e" stroke="#6a0e1a" stroke-width="1.4"/>
<circle cx="979.0" cy="634.1" r="5.3" fill="#3a3aa0" stroke="#161a60" stroke-width="1.4"/>
<circle cx="981.5" cy="634.7" r="5.3" fill="#dc404e" stroke="#6a0e1a" stroke-width="1.4"/>
<circle cx="980.5" cy="602.8" r="5.3" fill="#e47c86" stroke="#7a1e2c" stroke-width="1.4"/>
<circle cx="968.5" cy="596.3" r="5.3" fill="#dc404e" stroke="#6a0e1a" stroke-width="1.4"/>
<circle cx="992.6" cy="597.0" r="5.3" fill="#dc404e" stroke="#6a0e1a" stroke-width="1.4"/>
<circle cx="1014.1" cy="600.9" r="5.3" fill="#dc404e" stroke="#6a0e1a" stroke-width="1.4"/>
<path d="M1014.1 600.9 L1012.6 595.8 A5.3 5.3 0 0 1 1015.9 595.9 Z" fill="#3a1a1a" opacity="0.85"/>
<circle cx="1031.0" cy="605.4" r="5.3" fill="#dc404e" stroke="#6a0e1a" stroke-width="1.4"/>
<path d="M1031.0 605.4 L1031.0 600.1 A5.3 5.3 0 0 0 1025.7 605.4 Z" fill="#3a2d9a" opacity="0.9"/>
<circle cx="1023.2" cy="611.9" r="5.3" fill="#dc404e" stroke="#6a0e1a" stroke-width="1.4"/>
<circle cx="997.2" cy="614.5" r="5.3" fill="#5cc46c" stroke="#2b7c38" stroke-width="1.4"/>
<circle cx="989.4" cy="619.7" r="5.3" fill="#dc404e" stroke="#6a0e1a" stroke-width="1.4"/>
<circle cx="994.6" cy="618.4" r="5.3" fill="#dc404e" stroke="#6a0e1a" stroke-width="1.4"/>
<circle cx="1010.2" cy="610.6" r="5.3" fill="#dc404e" stroke="#6a0e1a" stroke-width="1.4"/>
<path d="M1010.2 610.6 L1008.7 605.5 A5.3 5.3 0 0 1 1012.0 605.6 Z" fill="#3a1a1a" opacity="0.85"/>
<circle cx="1006.3" cy="621.0" r="5.3" fill="#dc404e" stroke="#6a0e1a" stroke-width="1.4"/>
<circle cx="993.3" cy="634.1" r="5.3" fill="#e47c86" stroke="#7a1e2c" stroke-width="1.4"/>
<circle cx="1009.5" cy="632.8" r="5.3" fill="#e47c86" stroke="#7a1e2c" stroke-width="1.4"/>
<circle cx="1014.1" cy="640.6" r="5.3" fill="#dc404e" stroke="#6a0e1a" stroke-width="1.4"/>
<path d="M1014.1 640.6 L1014.1 635.3000000000001 A5.3 5.3 0 0 0 1008.8000000000001 640.6 Z" fill="#3a2d9a" opacity="0.9"/>
<circle cx="1036.2" cy="628.8" r="5.3" fill="#dc404e" stroke="#6a0e1a" stroke-width="1.4"/>
<path d="M1036.2 628.8 L1034.7 623.6999999999999 A5.3 5.3 0 0 1 1038.0 623.8 Z" fill="#3a1a1a" opacity="0.85"/>
<circle cx="956.8" cy="648.4" r="5.3" fill="#d442a8" stroke="#7a1258" stroke-width="1.4"/>
<circle cx="960.7" cy="647.1" r="5.3" fill="#d442a8" stroke="#7a1258" stroke-width="1.4"/>
<circle cx="955.5" cy="653.6" r="5.3" fill="#d442a8" stroke="#7a1258" stroke-width="1.4"/>
<circle cx="999.1" cy="647.1" r="5.3" fill="#dc404e" stroke="#6a0e1a" stroke-width="1.4"/>
<path d="M999.1 647.1 L997.6 642.0 A5.3 5.3 0 0 1 1000.9 642.1 Z" fill="#3a1a1a" opacity="0.85"/>
<circle cx="1002.4" cy="645.8" r="5.3" fill="#dc404e" stroke="#6a0e1a" stroke-width="1.4"/>
<circle cx="999.8" cy="654.2" r="5.3" fill="#e47c86" stroke="#7a1e2c" stroke-width="1.4"/>
<circle cx="1010.2" cy="654.9" r="5.3" fill="#dc404e" stroke="#6a0e1a" stroke-width="1.4"/>
<circle cx="1024.5" cy="649.7" r="5.3" fill="#e47c86" stroke="#7a1e2c" stroke-width="1.4"/>
<circle cx="1021.9" cy="656.2" r="5.3" fill="#e47c86" stroke="#7a1e2c" stroke-width="1.4"/>
<circle cx="984.2" cy="660.1" r="5.3" fill="#e47c86" stroke="#7a1e2c" stroke-width="1.4"/>
<circle cx="966.6" cy="662.7" r="5.3" fill="#dc404e" stroke="#6a0e1a" stroke-width="1.4"/>
<circle cx="975.0" cy="665.3" r="5.3" fill="#d442a8" stroke="#7a1258" stroke-width="1.4"/>
<circle cx="961.4" cy="661.4" r="5.3" fill="#d442a8" stroke="#7a1258" stroke-width="1.4"/>
<circle cx="999.8" cy="661.4" r="5.3" fill="#e47c86" stroke="#7a1e2c" stroke-width="1.4"/>
<circle cx="999.8" cy="668.6" r="5.3" fill="#dc404e" stroke="#6a0e1a" stroke-width="1.4"/>
<circle cx="1003.7" cy="667.9" r="5.3" fill="#dc404e" stroke="#6a0e1a" stroke-width="1.4"/>
<circle cx="988.0" cy="672.5" r="5.3" fill="#dc404e" stroke="#6a0e1a" stroke-width="1.4"/>
<path d="M988.0 672.5 L988.0 667.2 A5.3 5.3 0 0 0 982.7 672.5 Z" fill="#3a2d9a" opacity="0.9"/>
<circle cx="1034.9" cy="661.4" r="5.3" fill="#e47c86" stroke="#7a1e2c" stroke-width="1.4"/>
<circle cx="1033.0" cy="671.8" r="5.3" fill="#e47c86" stroke="#7a1e2c" stroke-width="1.4"/>
<circle cx="964.0" cy="673.1" r="5.3" fill="#d442a8" stroke="#7a1258" stroke-width="1.4"/>
<circle cx="958.8" cy="679.0" r="5.3" fill="#2b8fe8" stroke="#1a5a9a" stroke-width="1.4"/>
<circle cx="973.7" cy="679.0" r="5.3" fill="#dc404e" stroke="#6a0e1a" stroke-width="1.4"/>
<circle cx="1001.7" cy="679.6" r="5.3" fill="#dc404e" stroke="#6a0e1a" stroke-width="1.4"/>
<circle cx="1020.0" cy="679.6" r="5.3" fill="#dc404e" stroke="#6a0e1a" stroke-width="1.4"/>
<path d="M1020.0 679.6 L1018.5 674.5 A5.3 5.3 0 0 1 1021.8 674.6 Z" fill="#3a1a1a" opacity="0.85"/>
<circle cx="984.2" cy="687.4" r="5.3" fill="#dc404e" stroke="#6a0e1a" stroke-width="1.4"/>
<circle cx="960.7" cy="690.0" r="5.3" fill="#d442a8" stroke="#7a1258" stroke-width="1.4"/>
<circle cx="965.9" cy="686.1" r="5.3" fill="#d442a8" stroke="#7a1258" stroke-width="1.4"/>
<circle cx="969.8" cy="694.0" r="5.3" fill="#dc404e" stroke="#6a0e1a" stroke-width="1.4"/>
<circle cx="976.3" cy="691.3" r="5.3" fill="#d442a8" stroke="#7a1258" stroke-width="1.4"/>
<circle cx="994.6" cy="695.2" r="5.3" fill="#d442a8" stroke="#7a1258" stroke-width="1.4"/>
<circle cx="1008.2" cy="690.0" r="5.3" fill="#d442a8" stroke="#7a1258" stroke-width="1.4"/>
<circle cx="1006.3" cy="701.1" r="5.3" fill="#dc404e" stroke="#6a0e1a" stroke-width="1.4"/>
<path d="M1006.3 701.1 L1004.8 696.0 A5.3 5.3 0 0 1 1008.0999999999999 696.1 Z" fill="#3a1a1a" opacity="0.85"/>
<circle cx="964.6" cy="699.2" r="5.3" fill="#d442a8" stroke="#7a1258" stroke-width="1.4"/>
<circle cx="973.7" cy="701.8" r="5.3" fill="#d442a8" stroke="#7a1258" stroke-width="1.4"/>
<circle cx="973.7" cy="708.3" r="5.3" fill="#d442a8" stroke="#7a1258" stroke-width="1.4"/>
<circle cx="982.9" cy="709.6" r="5.3" fill="#d442a8" stroke="#7a1258" stroke-width="1.4"/>
<circle cx="1035.6" cy="705.7" r="5.3" fill="#5cc46c" stroke="#2b7c38" stroke-width="1.4"/>
<circle cx="1074.9" cy="600.7" r="5.3" fill="#dc404e" stroke="#6a0e1a" stroke-width="1.4"/>
<circle cx="1102.3" cy="600.7" r="5.3" fill="#3a3aa0" stroke="#161a60" stroke-width="1.4"/>
<circle cx="1119.8" cy="606.5" r="5.3" fill="#dc404e" stroke="#6a0e1a" stroke-width="1.4"/>
<path d="M1119.8 606.5 L1118.3 601.4 A5.3 5.3 0 0 1 1121.6 601.5 Z" fill="#3a1a1a" opacity="0.85"/>
<circle cx="1033.9" cy="606.5" r="5.3" fill="#dc404e" stroke="#6a0e1a" stroke-width="1.4"/>
<path d="M1033.9 606.5 L1033.9 601.2 A5.3 5.3 0 0 0 1028.6000000000001 606.5 Z" fill="#3a2d9a" opacity="0.9"/>
<circle cx="1056.0" cy="609.8" r="5.3" fill="#dc404e" stroke="#6a0e1a" stroke-width="1.4"/>
<path d="M1056.0 609.8 L1054.5 604.6999999999999 A5.3 5.3 0 0 1 1057.8 604.8 Z" fill="#3a1a1a" opacity="0.85"/>
<circle cx="1112.0" cy="617.6" r="5.3" fill="#dc404e" stroke="#6a0e1a" stroke-width="1.4"/>
<circle cx="1099.0" cy="619.5" r="5.3" fill="#dc404e" stroke="#6a0e1a" stroke-width="1.4"/>
<path d="M1099.0 619.5 L1097.5 614.4 A5.3 5.3 0 0 1 1100.8 614.5 Z" fill="#3a1a1a" opacity="0.85"/>
<circle cx="1062.5" cy="623.4" r="5.3" fill="#dc404e" stroke="#6a0e1a" stroke-width="1.4"/>
<circle cx="1069.0" cy="623.4" r="5.3" fill="#dc404e" stroke="#6a0e1a" stroke-width="1.4"/>
<path d="M1069.0 623.4 L1067.5 618.3 A5.3 5.3 0 0 1 1070.8 618.4 Z" fill="#3a1a1a" opacity="0.85"/>
<circle cx="1077.5" cy="629.3" r="5.3" fill="#e47c86" stroke="#7a1e2c" stroke-width="1.4"/>
<circle cx="1036.5" cy="628.6" r="5.3" fill="#dc404e" stroke="#6a0e1a" stroke-width="1.4"/>
<path d="M1036.5 628.6 L1035.0 623.5 A5.3 5.3 0 0 1 1038.3 623.6 Z" fill="#3a1a1a" opacity="0.85"/>
<circle cx="1057.3" cy="632.5" r="5.3" fill="#e47c86" stroke="#7a1e2c" stroke-width="1.4"/>
<circle cx="1097.0" cy="628.0" r="5.3" fill="#e47c86" stroke="#7a1e2c" stroke-width="1.4"/>
<circle cx="1097.0" cy="634.5" r="5.3" fill="#e47c86" stroke="#7a1e2c" stroke-width="1.4"/>
<circle cx="1048.0" cy="641.7" r="5.3" fill="#dc404e" stroke="#6a0e1a" stroke-width="1.4"/>
<circle cx="1061.9" cy="650.8" r="5.3" fill="#dc404e" stroke="#6a0e1a" stroke-width="1.4"/>
<circle cx="1045.6" cy="654.0" r="5.3" fill="#dc404e" stroke="#6a0e1a" stroke-width="1.4"/>
<circle cx="1105.5" cy="652.1" r="5.3" fill="#dc404e" stroke="#6a0e1a" stroke-width="1.4"/>
<circle cx="1036.5" cy="661.8" r="5.3" fill="#e47c86" stroke="#7a1e2c" stroke-width="1.4"/>
<circle cx="1055.4" cy="664.1" r="5.3" fill="#e2c43a" stroke="#7f7024" stroke-width="1.4"/>
<circle cx="1030.0" cy="672.3" r="5.3" fill="#e47c86" stroke="#7a1e2c" stroke-width="1.4"/>
<circle cx="1084.7" cy="669.7" r="5.3" fill="#dc404e" stroke="#6a0e1a" stroke-width="1.4"/>
<path d="M1084.7 669.7 L1083.2 664.6 A5.3 5.3 0 0 1 1086.5 664.7 Z" fill="#3a1a1a" opacity="0.85"/>
<circle cx="1105.5" cy="665.1" r="5.3" fill="#dc404e" stroke="#6a0e1a" stroke-width="1.4"/>
<circle cx="1112.7" cy="676.8" r="5.3" fill="#dc404e" stroke="#6a0e1a" stroke-width="1.4"/>
<path d="M1112.7 676.8 L1112.7 671.5 A5.3 5.3 0 0 0 1107.4 676.8 Z" fill="#3a2d9a" opacity="0.9"/>
<circle cx="1035.9" cy="706.1" r="5.3" fill="#5cc46c" stroke="#2b7c38" stroke-width="1.4"/>
<circle cx="1053.4" cy="708.1" r="5.3" fill="#dc404e" stroke="#6a0e1a" stroke-width="1.4"/>
<circle cx="1065.8" cy="703.5" r="5.3" fill="#e47c86" stroke="#7a1e2c" stroke-width="1.4"/>
<circle cx="1037.8" cy="717.2" r="5.3" fill="#5cc46c" stroke="#2b7c38" stroke-width="1.4"/>
<circle cx="1041.7" cy="717.2" r="5.3" fill="#5cc46c" stroke="#2b7c38" stroke-width="1.4"/>
<circle cx="1048.9" cy="717.8" r="5.3" fill="#dc404e" stroke="#6a0e1a" stroke-width="1.4"/>
<circle cx="968.4" cy="696.5" r="5.3" fill="#dc404e" stroke="#6a0e1a" stroke-width="1.4"/>
<circle cx="984.7" cy="691.1" r="5.3" fill="#dc404e" stroke="#6a0e1a" stroke-width="1.4"/>
<circle cx="995.5" cy="696.0" r="5.3" fill="#d442a8" stroke="#7a1258" stroke-width="1.4"/>
<circle cx="1006.4" cy="701.4" r="5.3" fill="#dc404e" stroke="#6a0e1a" stroke-width="1.4"/>
<path d="M1006.4 701.4 L1004.9 696.3 A5.3 5.3 0 0 1 1008.1999999999999 696.4 Z" fill="#3a1a1a" opacity="0.85"/>
<circle cx="989.6" cy="717.7" r="5.3" fill="#2b8fe8" stroke="#1a5a9a" stroke-width="1.4"/>
<circle cx="996.6" cy="717.1" r="5.3" fill="#e47c86" stroke="#7a1e2c" stroke-width="1.4"/>
<circle cx="1010.0" cy="719.8" r="5.3" fill="#dc404e" stroke="#6a0e1a" stroke-width="1.4"/>
<circle cx="1035.7" cy="706.0" r="5.3" fill="#5cc46c" stroke="#2b7c38" stroke-width="1.4"/>
<circle cx="1053.6" cy="707.9" r="5.3" fill="#dc404e" stroke="#6a0e1a" stroke-width="1.4"/>
<circle cx="1065.8" cy="703.6" r="5.3" fill="#e47c86" stroke="#7a1e2c" stroke-width="1.4"/>
<circle cx="1036.7" cy="717.7" r="5.3" fill="#5cc46c" stroke="#2b7c38" stroke-width="1.4"/>
<circle cx="1040.5" cy="718.2" r="5.3" fill="#5cc46c" stroke="#2b7c38" stroke-width="1.4"/>
<circle cx="1048.7" cy="720.9" r="5.3" fill="#dc404e" stroke="#6a0e1a" stroke-width="1.4"/>
<circle cx="1037.3" cy="726.3" r="5.3" fill="#dc404e" stroke="#6a0e1a" stroke-width="1.4"/>
<path d="M1037.3 726.3 L1035.8 721.1999999999999 A5.3 5.3 0 0 1 1039.1 721.3 Z" fill="#3a1a1a" opacity="0.85"/>
<circle cx="1016.7" cy="733.9" r="5.3" fill="#dc404e" stroke="#6a0e1a" stroke-width="1.4"/>
<circle cx="1025.9" cy="732.8" r="5.3" fill="#dc404e" stroke="#6a0e1a" stroke-width="1.4"/>
<path d="M1025.9 732.8 L1024.4 727.6999999999999 A5.3 5.3 0 0 1 1027.7 727.8 Z" fill="#3a1a1a" opacity="0.85"/>
<circle cx="1097.5" cy="725.2" r="5.3" fill="#e47c86" stroke="#7a1e2c" stroke-width="1.4"/>
<circle cx="1108.3" cy="730.7" r="5.3" fill="#e47c86" stroke="#7a1e2c" stroke-width="1.4"/>
<circle cx="1105.6" cy="742.6" r="5.3" fill="#e47c86" stroke="#7a1e2c" stroke-width="1.4"/>
<circle cx="1116.5" cy="743.1" r="5.3" fill="#3a3aa0" stroke="#161a60" stroke-width="1.4"/>
<circle cx="1108.9" cy="749.6" r="5.3" fill="#dc404e" stroke="#6a0e1a" stroke-width="1.4"/>
<circle cx="983.6" cy="743.7" r="5.3" fill="#8a2a8e" stroke="#4a1050" stroke-width="1.4"/>
<circle cx="993.9" cy="747.5" r="5.3" fill="#dc404e" stroke="#6a0e1a" stroke-width="1.4"/>
<circle cx="1005.8" cy="748.0" r="5.3" fill="#dc404e" stroke="#6a0e1a" stroke-width="1.4"/>
<circle cx="992.8" cy="757.2" r="5.3" fill="#e47c86" stroke="#7a1e2c" stroke-width="1.4"/>
<circle cx="1000.4" cy="760.0" r="5.3" fill="#8a2a8e" stroke="#4a1050" stroke-width="1.4"/>
<circle cx="1012.9" cy="757.2" r="5.3" fill="#8a2a8e" stroke="#4a1050" stroke-width="1.4"/>
<circle cx="1012.4" cy="769.2" r="5.3" fill="#8a2a8e" stroke="#4a1050" stroke-width="1.4"/>
<circle cx="1018.3" cy="773.0" r="5.3" fill="#e47c86" stroke="#7a1e2c" stroke-width="1.4"/>
<circle cx="1036.7" cy="742.0" r="5.3" fill="#dc404e" stroke="#6a0e1a" stroke-width="1.4"/>
<path d="M1036.7 742.0 L1035.2 736.9 A5.3 5.3 0 0 1 1038.5 737.0 Z" fill="#3a1a1a" opacity="0.85"/>
<circle cx="1041.1" cy="739.3" r="5.3" fill="#dc404e" stroke="#6a0e1a" stroke-width="1.4"/>
<circle cx="1050.8" cy="742.0" r="5.3" fill="#5cc46c" stroke="#2b7c38" stroke-width="1.4"/>
<circle cx="1054.1" cy="745.3" r="5.3" fill="#5cc46c" stroke="#2b7c38" stroke-width="1.4"/>
<circle cx="1055.7" cy="736.6" r="5.3" fill="#e47c86" stroke="#7a1e2c" stroke-width="1.4"/>
<circle cx="1028.1" cy="756.1" r="5.3" fill="#dc404e" stroke="#6a0e1a" stroke-width="1.4"/>
<circle cx="1035.7" cy="755.0" r="5.3" fill="#dc404e" stroke="#6a0e1a" stroke-width="1.4"/>
<circle cx="1045.4" cy="750.7" r="5.3" fill="#dc404e" stroke="#6a0e1a" stroke-width="1.4"/>
<circle cx="1053.0" cy="755.0" r="5.3" fill="#dc404e" stroke="#6a0e1a" stroke-width="1.4"/>
<circle cx="1043.3" cy="757.2" r="5.3" fill="#dc404e" stroke="#6a0e1a" stroke-width="1.4"/>
<circle cx="1079.0" cy="743.7" r="5.3" fill="#5cc46c" stroke="#2b7c38" stroke-width="1.4"/>
<circle cx="1077.4" cy="751.8" r="5.3" fill="#dc404e" stroke="#6a0e1a" stroke-width="1.4"/>
<circle cx="1074.2" cy="764.3" r="5.3" fill="#e47c86" stroke="#7a1e2c" stroke-width="1.4"/>
<circle cx="1061.1" cy="769.2" r="5.3" fill="#dc404e" stroke="#6a0e1a" stroke-width="1.4"/>
<circle cx="958.0" cy="640.0" r="5.3" fill="#d442a8" stroke="#7a1258" stroke-width="1.4"/>
<circle cx="962.0" cy="655.0" r="5.3" fill="#dc404e" stroke="#6a0e1a" stroke-width="1.4"/>
<circle cx="968.0" cy="645.0" r="5.3" fill="#d442a8" stroke="#7a1258" stroke-width="1.4"/>
<circle cx="957.0" cy="668.0" r="5.3" fill="#d442a8" stroke="#7a1258" stroke-width="1.4"/>
<circle cx="970.0" cy="672.0" r="5.3" fill="#dc404e" stroke="#6a0e1a" stroke-width="1.4"/>
<circle cx="978.0" cy="682.0" r="5.3" fill="#dc404e" stroke="#6a0e1a" stroke-width="1.4"/>
<circle cx="962.0" cy="684.0" r="5.3" fill="#d442a8" stroke="#7a1258" stroke-width="1.4"/>
<circle cx="972.0" cy="690.0" r="5.3" fill="#dc404e" stroke="#6a0e1a" stroke-width="1.4"/>
<circle cx="980.0" cy="700.0" r="5.3" fill="#d442a8" stroke="#7a1258" stroke-width="1.4"/>
<circle cx="988.0" cy="706.0" r="5.3" fill="#d442a8" stroke="#7a1258" stroke-width="1.4"/>
<circle cx="966.0" cy="708.0" r="5.3" fill="#dc404e" stroke="#6a0e1a" stroke-width="1.4"/>
<circle cx="958.0" cy="695.0" r="5.3" fill="#d442a8" stroke="#7a1258" stroke-width="1.4"/>
<circle cx="984.0" cy="660.0" r="5.3" fill="#dc404e" stroke="#6a0e1a" stroke-width="1.4"/>
<circle cx="966.0" cy="702.0" r="5.3" fill="#d442a8" stroke="#7a1258" stroke-width="1.4"/>
<circle cx="970.0" cy="712.0" r="5.3" fill="#d442a8" stroke="#7a1258" stroke-width="1.4"/>
<circle cx="978.0" cy="705.0" r="5.3" fill="#d442a8" stroke="#7a1258" stroke-width="1.4"/>
<circle cx="962.0" cy="706.0" r="5.3" fill="#d442a8" stroke="#7a1258" stroke-width="1.4"/>
<circle cx="975.0" cy="714.0" r="5.3" fill="#d442a8" stroke="#7a1258" stroke-width="1.4"/></g>
<g font-family="Liberation Sans" fill="#77736f">
<text x="952" y="488.6" font-size="14.5" letter-spacing="-0.8">ALBERTA</text>
<text x="981" y="577" font-size="15" opacity="0.6">Edmonton</text>
<text x="987" y="698" font-size="15" opacity="0.6">Calgary</text>
<text x="1180" y="607" font-size="15" fill="#8a8682">SAS</text>
<text x="745" y="824.4" font-size="15" fill="#5b5856" letter-spacing="0.5">attle</text>
<text x="767.5" y="856.6" font-size="14" font-weight="bold" fill="#86817c" letter-spacing="0.2">WASHINGTON</text>
<text x="1099" y="864.8" font-size="14" font-weight="bold" fill="#86817c" letter-spacing="0.6">MONTANA</text>
</g>
<circle cx="756.5" cy="836.1" r="2.8" fill="#555"/>
<!-- bing logo -->
<path d="M755 849 L759 850.5 L759 863 L766 859 L762.5 857 L761 853 L769 856.5 L769 861 L759 868.5 L755 866 Z" fill="#111"/>
<text x="775" y="865.2" font-family="Liberation Sans" font-size="16.5" fill="#111">Bing</text>
<text x="886" y="872.7" font-family="Liberation Sans" font-size="11.5" fill="#252423">© 2021 TomTom, © 2021 Microsoft Corporation</text>
<text x="1136" y="872.7" font-family="Liberation Sans" font-size="11.5" fill="#5058a8" text-decoration="underline">Terms</text>
<!-- zoom buttons -->
<g stroke="#151515" stroke-width="2" fill="#fff">
<circle cx="1136.2" cy="181.8" r="20.5"/>
<circle cx="1136.2" cy="254.4" r="20.5"/>
</g>
<g stroke="#303030" stroke-width="2.2">
<path d="M1125.5 181.8 H1147 M1136.2 171 V192.5"/>
<path d="M1125.5 254.4 H1147"/>
</g>

</svg></div>
<div class="a" style="left:748px;top:896px;font-size:16px;line-height:16px;font-weight:bold;color:#605e5c">Species Co...</div>
<svg class="a" style="left:740px;top:891px" width="470" height="25" viewBox="740 890 470 25">
<circle cx="866.5" cy="902" r="6.5" fill="#118dff"/>
<circle cx="933.6" cy="902" r="6.5" fill="#12239e"/>
<circle cx="996.3" cy="902" r="6.5" fill="#e66c37"/>
<circle cx="1056.5" cy="902" r="6.5" fill="#6b007b"/>
<circle cx="1121.7" cy="902" r="6.5" fill="#e044a7"/>
<path d="M1190 896 L1198 902 L1190 908 Z" fill="#252423"/>
</svg>
<div class="a" style="left:876.5px;top:896px;font-size:16px;line-height:16px;color:#605e5c;letter-spacing:-0.9px">ARGR</div>
<div class="a" style="left:943.4px;top:896px;font-size:16px;line-height:16px;color:#605e5c;letter-spacing:-0.9px">BKTR</div>
<div class="a" style="left:1006px;top:896px;font-size:16px;line-height:16px;color:#605e5c;letter-spacing:-0.9px">BLTR</div>
<div class="a" style="left:1066.3px;top:896px;font-size:16px;line-height:16px;color:#605e5c;letter-spacing:-0.9px">BNTR</div>
<div class="a" style="left:1131.4px;top:896px;font-size:16px;line-height:16px;color:#605e5c;letter-spacing:-0.9px">CTTR</div>


<!-- MAP 2 -->
<div class="a" style="left:1232px;top:152px;width:416px;height:770px;overflow:hidden"><svg width="416" height="770" viewBox="1232 152 416 770" style="display:block">
<defs>
<filter id="texov" x="0" y="0" width="100%" height="100%" color-interpolation-filters="sRGB">
  <feGaussianBlur in="SourceGraphic" stdDeviation="12" result="base"/>
  <feTurbulence type="fractalNoise" baseFrequency="0.09" numOctaves="3" seed="11" result="n"/>
  <feColorMatrix in="n" type="matrix" values="0.42 0 0 0 0.29  0.42 0 0 0 0.29  0.42 0 0 0 0.29  0 0 0 0 1" result="g"/>
  <feBlend in="g" in2="base" mode="overlay" result="o"/>
  <feComposite in="o" in2="SourceAlpha" operator="in"/>
</filter>
<filter id="snow" x="0" y="0" width="100%" height="100%">
  <feTurbulence type="fractalNoise" baseFrequency="0.15" numOctaves="3" seed="3" result="n"/>
  <feColorMatrix in="n" type="matrix" values="0 0 0 0 0.9  0 0 0 0 0.9  0 0 0 0 0.88  5 0 0 0 -2.85"/>
</filter>
<filter id="bl1" x="-20%" y="-20%" width="140%" height="140%"><feGaussianBlur stdDeviation="1"/></filter>
<filter id="bl3" x="-50%" y="-50%" width="200%" height="200%"><feGaussianBlur stdDeviation="3"/></filter>
<radialGradient id="haze"><stop offset="0" stop-color="#52c49a" stop-opacity="0.68"/><stop offset="0.55" stop-color="#44b48c" stop-opacity="0.42"/><stop offset="1" stop-color="#38a888" stop-opacity="0"/></radialGradient>
<radialGradient id="hot"><stop offset="0" stop-color="#d8cc2a" stop-opacity="0.85"/><stop offset="0.3" stop-color="#b4c23a" stop-opacity="0.7"/><stop offset="0.65" stop-color="#5cb870" stop-opacity="0.45"/><stop offset="1" stop-color="#35b0a0" stop-opacity="0"/></radialGradient>
<radialGradient id="red"><stop offset="0" stop-color="#e8361c"/><stop offset="0.22" stop-color="#ec4a1c"/><stop offset="0.45" stop-color="#e6c42a" stop-opacity="0.95"/><stop offset="0.7" stop-color="#6cc070" stop-opacity="0.6"/><stop offset="1" stop-color="#35b0a0" stop-opacity="0"/></radialGradient>
</defs>
<g filter="url(#texov)">
<rect x="1182" y="102" width="516" height="870" fill="#5e6849"/>
<ellipse cx="1262" cy="200" rx="45" ry="60" fill="#667050"/>
<ellipse cx="1330" cy="190" rx="45" ry="45" fill="#5e6947"/>
<ellipse cx="1420" cy="215" rx="40" ry="30" fill="#636c48"/>
<ellipse cx="1455" cy="205" rx="45" ry="20" fill="#787255"/>
<ellipse cx="1500" cy="210" rx="45" ry="45" fill="#496439"/>
<ellipse cx="1610" cy="205" rx="30" ry="30" fill="#6d714e"/>
<ellipse cx="1262" cy="330" rx="45" ry="75" fill="#6a7156"/>
<ellipse cx="1335" cy="350" rx="45" ry="60" fill="#446238"/>
<ellipse cx="1420" cy="285" rx="25" ry="22" fill="#747352"/>
<ellipse cx="1400" cy="330" rx="22" ry="20" fill="#798167"/>
<ellipse cx="1490" cy="300" rx="35" ry="40" fill="#606c4b"/>
<ellipse cx="1455" cy="372" rx="22" ry="18" fill="#6f714f"/>
<ellipse cx="1620" cy="350" rx="35" ry="50" fill="#5d6e50"/>
<ellipse cx="1520" cy="395" rx="45" ry="35" fill="#4f633f"/>
<ellipse cx="1530" cy="446" rx="20" ry="15" fill="#6e7150"/>
<ellipse cx="1600" cy="460" rx="50" ry="60" fill="#41613a"/>
<ellipse cx="1255" cy="440" rx="35" ry="50" fill="#375532"/>
<ellipse cx="1335" cy="430" rx="45" ry="40" fill="#425f37"/>
<ellipse cx="1440" cy="440" rx="70" ry="60" fill="#4a5e3a"/>
<ellipse cx="1380" cy="520" rx="60" ry="40" fill="#3e5c34"/>
<path d="M1182 470 L1260 480 L1330 560 L1400 640 L1445 710 L1460 800 L1182 800 Z" fill="#294727"/>
<ellipse cx="1320" cy="700" rx="50" ry="60" fill="#2d4d2b"/>
<ellipse cx="1450" cy="620" rx="40" ry="55" fill="#536343"/>
<ellipse cx="1520" cy="540" rx="40" ry="40" fill="#56653f"/>
<path d="M1500 650 L1648 590 L1648 800 L1480 800 L1470 720 Z" fill="#6c6e56"/>
<ellipse cx="1500" cy="600" rx="50" ry="50" fill="#4f5e3c"/>
<ellipse cx="1395" cy="690" rx="25" ry="50" fill="#56624f"/>
<ellipse cx="1580" cy="640" rx="50" ry="40" fill="#626a4e"/>
<ellipse cx="1560" cy="730" rx="70" ry="50" fill="#76735a"/>
<ellipse cx="1620" cy="560" rx="35" ry="35" fill="#4b6640"/>
<ellipse cx="1280" cy="850" rx="60" ry="60" fill="#415937"/>
<ellipse cx="1330" cy="890" rx="45" ry="40" fill="#6e6c55"/>
<ellipse cx="1250" cy="905" rx="30" ry="30" fill="#33512e"/>
<ellipse cx="1430" cy="850" rx="45" ry="60" fill="#35552f"/>
<ellipse cx="1460" cy="905" rx="40" ry="30" fill="#4a6139"/>
<ellipse cx="1540" cy="850" rx="55" ry="60" fill="#7c7760"/>
<ellipse cx="1595" cy="825" rx="22" ry="18" fill="#375b31"/>
<ellipse cx="1620" cy="890" rx="35" ry="35" fill="#747659"/>
</g>
<clipPath id="mtn"><path d="M1232 470 L1262 480 L1310 530 L1360 580 L1405 630 L1430 690 L1425 760 L1390 760 L1370 700 L1340 650 L1290 610 L1250 590 L1232 580 Z"/></clipPath>
<rect x="1232" y="460" width="260" height="310" filter="url(#snow)" clip-path="url(#mtn)" opacity="0.6"/>
<g filter="url(#bl1)">
<path d="M1370 152 L1482 152 L1478 166 L1465 172 L1448 176 L1432 180 L1418 178 L1403 174 L1396 166 L1392 160 L1385 163 L1372 158 Z" fill="#14232c"/>
<path d="M1441 153 L1480 152 L1477 166 L1463 172 L1447 175 L1440 168 Z" fill="#22586a"/>
<path d="M1370 153 L1392 153 L1392 163 L1380 165 L1372 159 Z" fill="#3a6a55" opacity="0.8"/>
<path d="M1245 197 L1252 186 L1260 189 L1257 199 L1251 207 L1245 204 Z" fill="#151f1c"/>
<path d="M1350 171 L1358 169 L1367 174 L1366 179 L1356 177 Z" fill="#121c18"/>
<path d="M1351 201 L1360 192 L1372 191 L1375 198 L1368 205 L1356 205 Z" fill="#2a5e68"/>
<path d="M1412 219 L1422 214 L1430 210 L1436 212 L1432 222 L1424 225 L1414 223 Z" fill="#1c3e40"/>
<ellipse cx="1326" cy="246" rx="10" ry="5" fill="#151f1c"/>
<path d="M1588 246 L1605 246 L1625 252 L1648 256 L1648 284 L1628 288 L1604 292 L1590 286 L1584 270 Z" fill="#101c26"/>
<path d="M1553 309 L1562 296 L1576 284 L1590 281 L1588 292 L1576 302 L1562 311 Z" fill="#2a6474"/>
<path d="M1600 286 L1648 276 L1648 283 L1605 292 Z" fill="#d8dcd4" opacity="0.7"/>
<ellipse cx="1524" cy="311" rx="9" ry="12" fill="#2a5a68"/>
<ellipse cx="1621" cy="452" rx="12" ry="6" fill="#151f1c"/>
<ellipse cx="1599" cy="430" rx="4" ry="6" fill="#151f1c"/>
<ellipse cx="1425" cy="482" rx="16" ry="4" fill="#1e2a22"/>
<ellipse cx="1540" cy="340" rx="3" ry="4" fill="#151f1c"/>
<ellipse cx="1463" cy="842" rx="4" ry="9" fill="#1a2420"/>
<ellipse cx="1397" cy="832" rx="3.5" ry="7" fill="#1a2420"/>
</g>
<path d="M1355 257 L1383 252" stroke="#e8ece8" stroke-width="3.5" opacity="0.85" filter="url(#bl1)"/>


<g fill="none" stroke="#a88c96" stroke-width="2" opacity="0.6">
<path d="M1361.5 152 L1370 168.7 L1399 185.4 L1403 198 L1386.6 223 L1374 252 L1357 285.7 L1369.8 310.7 L1369.8 331.6 L1361.5 352.5 L1365.7 386 L1357.3 411 L1369.8 444.4 L1378 469.5 L1374 494.5 L1378 528 L1400 555 L1440 570 L1478 579"/>
<path d="M1232 407 L1257 436 L1282 461 L1232 474"/>
<path d="M1353 591 L1399 576.7 L1482.6 578.8 L1541 587 L1591 599.7 L1648 620.5"/>
<path d="M1478.5 578.8 L1470 662 L1466 700 L1482.6 733 L1524.4 771 L1528.6 792"/>
<path d="M1467 700 L1524.4 708.3 L1549.5 733 L1587 746 L1648 737.5"/>
<path d="M1499 675 L1591 679 L1648 671"/>
<path d="M1232 655 L1250 670 L1245 710 L1275 715 L1300 725 L1285 780 L1260 792"/>
<path d="M1300 725 L1340 700 L1390 690 L1420 700"/>
<path d="M1232 792 L1300 790 L1380 792 L1420 785 L1465 792"/>
<path d="M1232 871 L1294.7 867 L1378 854.5 L1441 871 L1482.6 892 L1524.4 900 L1549.5 922"/>
<path d="M1540 860 L1570 840 L1600 838 L1648 825"/>
</g>
<g filter="url(#bl3)"><ellipse cx="1470" cy="640" rx="80" ry="90" fill="url(#haze)" opacity="0.5"/><ellipse cx="1500" cy="760" rx="70" ry="35" fill="url(#haze)" opacity="0.5"/>
<circle cx="1307" cy="315" r="18" fill="url(#haze)"/>
<circle cx="1328" cy="277" r="16" fill="url(#haze)"/>
<circle cx="1374" cy="313" r="20" fill="url(#haze)"/>
<circle cx="1407" cy="332" r="20" fill="url(#haze)"/>
<circle cx="1549" cy="423" r="19" fill="url(#haze)"/>
<circle cx="1558" cy="444" r="17" fill="url(#haze)"/>
<circle cx="1295" cy="436" r="18" fill="url(#haze)"/>
<circle cx="1336" cy="449" r="20" fill="url(#haze)"/>
<circle cx="1370" cy="440" r="18" fill="url(#haze)"/>
<circle cx="1320" cy="470" r="19" fill="url(#haze)"/>
<circle cx="1332" cy="495" r="18" fill="url(#haze)"/>
<circle cx="1366" cy="478" r="18" fill="url(#haze)"/>
<circle cx="1428" cy="515" r="18" fill="url(#haze)"/>
<circle cx="1324" cy="562" r="20" fill="url(#haze)"/>
<circle cx="1357" cy="578" r="22" fill="url(#haze)"/>
<circle cx="1428" cy="600" r="20" fill="url(#haze)"/>
<circle cx="1499" cy="608" r="22" fill="url(#haze)"/>
<circle cx="1549" cy="612" r="20" fill="url(#haze)"/>
<circle cx="1533" cy="641" r="20" fill="url(#haze)"/>
<circle cx="1579" cy="641" r="18" fill="url(#haze)"/>
<circle cx="1575" cy="696" r="19" fill="url(#haze)"/>
<circle cx="1579" cy="765" r="19" fill="url(#haze)"/>
<circle cx="1516" cy="738" r="22" fill="url(#haze)"/>
<circle cx="1449" cy="637" r="20" fill="url(#haze)"/>
<circle cx="1391" cy="641" r="18" fill="url(#haze)"/>
<circle cx="1462" cy="754" r="20" fill="url(#haze)"/>
<circle cx="1483" cy="783" r="20" fill="url(#haze)"/>
<circle cx="1520" cy="687" r="20" fill="url(#haze)"/>
<circle cx="1558" cy="550" r="17" fill="url(#haze)"/>
<circle cx="1432" cy="545" r="18" fill="url(#haze)"/>
<circle cx="1480" cy="660" r="24" fill="url(#haze)"/>
<circle cx="1440" cy="680" r="20" fill="url(#haze)"/>
<circle cx="1410" cy="720" r="18" fill="url(#haze)"/>
<circle cx="1500" cy="580" r="20" fill="url(#haze)"/>
</g>
<ellipse cx="1400" cy="330" rx="15" ry="13" fill="#c8c4ac" opacity="0.38" filter="url(#bl3)"/><ellipse cx="1392" cy="318" rx="8" ry="5" fill="#d8d4c0" opacity="0.35" filter="url(#bl3)"/>
<circle cx="1526" cy="511" r="14" fill="url(#hot)"/>
<circle cx="1389" cy="606" r="14" fill="url(#hot)"/>
<circle cx="1407" cy="631" r="13" fill="url(#hot)"/>
<circle cx="1439" cy="648" r="15" fill="url(#hot)"/>
<circle cx="1464" cy="577" r="14" fill="url(#hot)"/>
<circle cx="1480" cy="566" r="14" fill="url(#hot)"/>
<circle cx="1466" cy="775" r="15" fill="url(#hot)"/>
<circle cx="1506" cy="769" r="15" fill="url(#hot)"/>
<ellipse cx="1434" cy="728" rx="13" ry="18" fill="url(#hot)"/><circle cx="1430.4" cy="708.3" r="22" fill="url(#red)"/>
<g stroke="#dfe2d2" stroke-width="1.6" stroke-dasharray="2 3" opacity="0.6" fill="none">
<path d="M1232 230.5 L1648 230.5"/>
<path d="M1291.5 230.5 L1291.5 520"/>
<path d="M1585.5 230.5 L1585.5 793"/>
<path d="M1378 793 L1378 922"/>
<path d="M1407.4 793 L1416 846 L1449 892 L1466 922"/>
<path d="M1440 720 L1450 760 L1470 793"/>
</g>
<path d="M1232 793" stroke="none"/>
<rect x="1232" y="792" width="416" height="2" fill="#d6d8ce" opacity="0.8"/>
<g font-family="Liberation Sans" font-weight="bold" fill="#e6e6de" style="paint-order:stroke" stroke="#2a3a22" stroke-width="2" stroke-opacity="0.35">
<text x="1417.5" y="509.4" font-size="13" letter-spacing="-0.1">ALBERTA</text>
<text x="1233.5" y="877" font-size="14" letter-spacing="0.2">WASHINGTON</text>
<text x="1565.5" y="884.6" font-size="14" letter-spacing="0.6">MONTANA</text>
</g>
<g font-family="Liberation Sans" fill="#ffffff" style="paint-order:stroke" stroke="#2a3020" stroke-width="2.5" stroke-opacity="0.45">
<text x="1447" y="597.6" font-size="15" font-weight="bold">Edmonton</text>
<text x="1440" y="720.8" font-size="15" font-weight="bold">Calgary</text>
</g>
<circle cx="1483.5" cy="579.2" r="4" fill="#f08060" stroke="#fff" stroke-width="1.6"/>
<circle cx="1467.2" cy="700" r="5" fill="#fff"/>
<g>
<circle cx="1583.4" cy="182.3" r="24" fill="#222" opacity="0.55" filter="url(#bl1)"/>
<circle cx="1583.4" cy="182.3" r="20.5" fill="#4a4a4a" stroke="#1a1a1a" stroke-width="2"/>
<circle cx="1583.4" cy="255.3" r="24" fill="#222" opacity="0.55" filter="url(#bl1)"/>
<circle cx="1583.4" cy="255.3" r="20.5" fill="#4a4a4a" stroke="#1a1a1a" stroke-width="2"/>
<path d="M1572.5 182.3 H1594.3 M1583.4 171.4 V193.2" stroke="#fff" stroke-width="2.6"/>
<path d="M1572.5 255.3 H1594.3" stroke="#fff" stroke-width="2.6"/>
</g>
<path d="M1239 888 L1243 889.5 L1243 903 L1250 899 L1246.5 897 L1245 893 L1253.5 896.5 L1253.5 901 L1243 909.5 L1239 907 Z" fill="#fff"/>
<text x="1260" y="905" font-family="Liberation Sans" font-size="16.5" fill="#fff">Bing</text>
<text x="1426" y="913" font-family="Liberation Sans" font-size="11.5" fill="#fff" style="paint-order:stroke" stroke="#222" stroke-width="1.5" stroke-opacity="0.6">© 2021 Microsoft Corporation</text>
<text x="1585" y="913" font-family="Liberation Sans" font-size="11.5" fill="#e8e8ff" text-decoration="underline" style="paint-order:stroke" stroke="#222" stroke-width="1.5" stroke-opacity="0.6">Terms</text>

</svg></div>

</body></html>
